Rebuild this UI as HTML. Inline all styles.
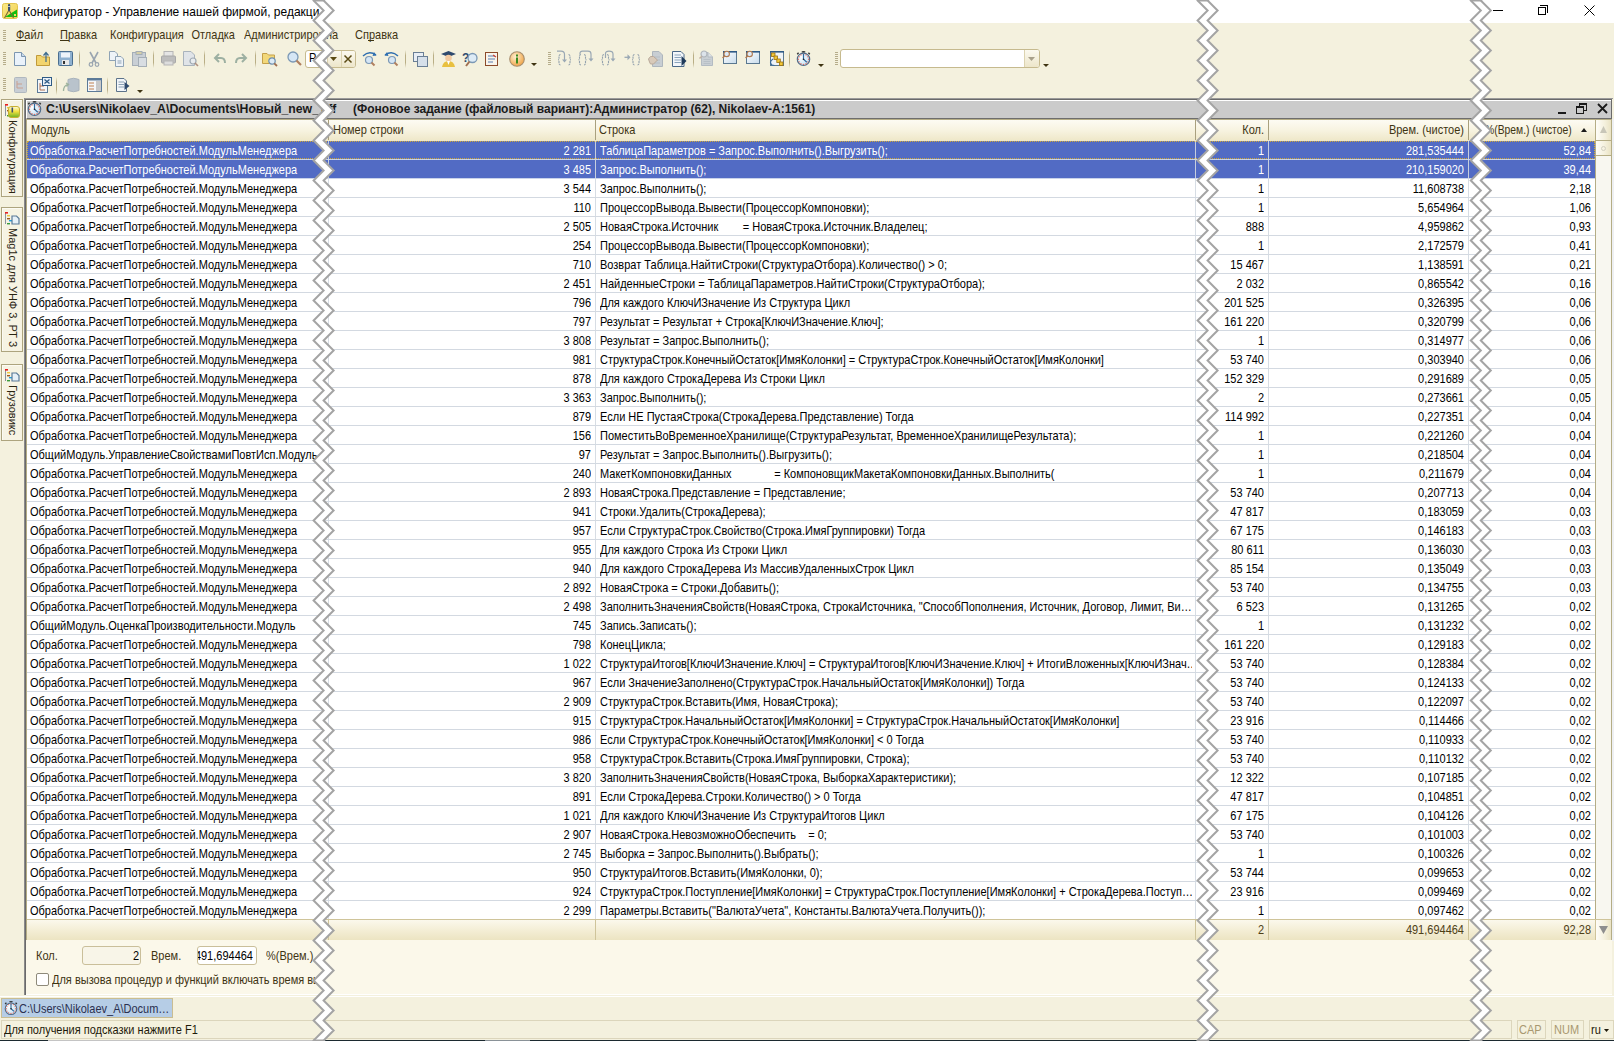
<!DOCTYPE html><html><head><meta charset="utf-8"><style>
*{box-sizing:border-box}
html,body{margin:0;padding:0}
body{width:1614px;height:1041px;position:relative;overflow:hidden;background:#F4F1DE;font-family:'Liberation Sans', sans-serif;font-size:11px;color:#000}
.a{position:absolute}
.t{position:absolute;white-space:pre;line-height:13px;transform:scaleY(1.1);transform-origin:0 10.3px}
.r{text-align:right}
.hd{color:#3E3412}
svg{position:absolute;overflow:visible}
</style></head><body>

<div class="a" style="left:0;top:0;width:1614px;height:23px;background:#fff"></div>
<svg style="left:2px;top:3px" width="16" height="16" viewBox="0 0 16 16">
<defs><linearGradient id="ag" x1="0" y1="0" x2="1" y2="1"><stop offset="0" stop-color="#FBEA88"/><stop offset="1" stop-color="#F2D050"/></linearGradient></defs>
<rect x="0.5" y="0.5" width="15" height="15" rx="2" fill="url(#ag)" stroke="#E2C550"/>
<path d="M3 14 L15 6.5 L15 14Z" fill="#10BE10"/>
<rect x="12" y="11" width="2" height="2" fill="#F6D860"/>
<path d="M7 7 L2.5 15 M7 7 L11.5 15" stroke="#7A6A30" stroke-width="1.1" fill="none"/>
<rect x="6" y="1" width="2.2" height="7" rx="1" fill="#3A5070"/>
<rect x="6" y="3" width="2.2" height="1" fill="#B8C0C8"/>
</svg>
<div class="t" style="left:23px;top:5px;font-size:12px;line-height:15px;transform-origin:0 11.7px;color:#000">Конфигуратор - Управление нашей фирмой, редакци</div>
<div class="a" style="left:1493px;top:10px;width:10px;height:1px;background:#000"></div>
<div class="a" style="left:1538px;top:7px;width:8px;height:8px;border:1px solid #000;background:#fff"></div>
<div class="a" style="left:1540px;top:5px;width:8px;height:2px;border-top:1px solid #000;"></div>
<div class="a" style="left:1547px;top:5px;width:1px;height:8px;background:#000"></div>
<svg style="left:1584px;top:5px" width="11" height="11" viewBox="0 0 11 11"><path d="M0.5 0.5 L10.5 10.5 M10.5 0.5 L0.5 10.5" stroke="#000" stroke-width="1"/></svg>
<div class="a" style="left:3px;top:30px;width:3px;height:1px;background:#B5AC8A"></div><div class="a" style="left:3px;top:32px;width:3px;height:1px;background:#B5AC8A"></div><div class="a" style="left:3px;top:34px;width:3px;height:1px;background:#B5AC8A"></div><div class="a" style="left:3px;top:36px;width:3px;height:1px;background:#B5AC8A"></div><div class="a" style="left:3px;top:38px;width:3px;height:1px;background:#B5AC8A"></div><div class="a" style="left:3px;top:40px;width:3px;height:1px;background:#B5AC8A"></div>
<div class="t hd" style="left:16px;top:29px">Файл</div>
<div class="t hd" style="left:60px;top:29px">Правка</div>
<div class="t hd" style="left:110px;top:29px">Конфигурация</div>
<div class="t hd" style="left:191.5px;top:29px">Отладка</div>
<div class="t hd" style="left:244px;top:29px">Администриров</div>
<div class="t hd" style="left:326px;top:29px">на</div>
<div class="t hd" style="left:355px;top:29px">Справка</div>
<div class="a" style="left:16px;top:40px;width:10px;height:1px;background:#3E3412"></div>
<div class="a" style="left:60px;top:40px;width:9px;height:1px;background:#3E3412"></div>
<div class="a" style="left:368px;top:40px;width:6px;height:1px;background:#3E3412"></div>
<div class="a" style="left:3px;top:52px;width:3px;height:1px;background:#B5AC8A"></div><div class="a" style="left:3px;top:54px;width:3px;height:1px;background:#B5AC8A"></div><div class="a" style="left:3px;top:56px;width:3px;height:1px;background:#B5AC8A"></div><div class="a" style="left:3px;top:58px;width:3px;height:1px;background:#B5AC8A"></div><div class="a" style="left:3px;top:60px;width:3px;height:1px;background:#B5AC8A"></div><div class="a" style="left:3px;top:62px;width:3px;height:1px;background:#B5AC8A"></div><div class="a" style="left:3px;top:64px;width:3px;height:1px;background:#B5AC8A"></div>
<div class="a" style="left:3px;top:78px;width:3px;height:1px;background:#B5AC8A"></div><div class="a" style="left:3px;top:80px;width:3px;height:1px;background:#B5AC8A"></div><div class="a" style="left:3px;top:82px;width:3px;height:1px;background:#B5AC8A"></div><div class="a" style="left:3px;top:84px;width:3px;height:1px;background:#B5AC8A"></div><div class="a" style="left:3px;top:86px;width:3px;height:1px;background:#B5AC8A"></div><div class="a" style="left:3px;top:88px;width:3px;height:1px;background:#B5AC8A"></div><div class="a" style="left:3px;top:90px;width:3px;height:1px;background:#B5AC8A"></div>
<div class="a" style="left:548px;top:52px;width:3px;height:1px;background:#B5AC8A"></div><div class="a" style="left:548px;top:54px;width:3px;height:1px;background:#B5AC8A"></div><div class="a" style="left:548px;top:56px;width:3px;height:1px;background:#B5AC8A"></div><div class="a" style="left:548px;top:58px;width:3px;height:1px;background:#B5AC8A"></div><div class="a" style="left:548px;top:60px;width:3px;height:1px;background:#B5AC8A"></div><div class="a" style="left:548px;top:62px;width:3px;height:1px;background:#B5AC8A"></div><div class="a" style="left:548px;top:64px;width:3px;height:1px;background:#B5AC8A"></div>
<div class="a" style="left:835px;top:52px;width:3px;height:1px;background:#B5AC8A"></div><div class="a" style="left:835px;top:54px;width:3px;height:1px;background:#B5AC8A"></div><div class="a" style="left:835px;top:56px;width:3px;height:1px;background:#B5AC8A"></div><div class="a" style="left:835px;top:58px;width:3px;height:1px;background:#B5AC8A"></div><div class="a" style="left:835px;top:60px;width:3px;height:1px;background:#B5AC8A"></div><div class="a" style="left:835px;top:62px;width:3px;height:1px;background:#B5AC8A"></div><div class="a" style="left:835px;top:64px;width:3px;height:1px;background:#B5AC8A"></div>
<svg style="left:13px;top:51px" width="14" height="16" viewBox="0 0 14 16"><path d="M1.5 1.5 H8.5 L12.5 5.5 V14.5 H1.5Z" fill="#EAF2FA" stroke="#7C96B0"/><path d="M8.5 1.5 V5.5 H12.5" fill="#C9D9EA" stroke="#7C96B0"/></svg><svg style="left:36px;top:51px" width="15" height="16" viewBox="0 0 15 16"><path d="M0.5 4.5 H5 L6.5 6 H13.5 V14.5 H0.5Z" fill="#F2D46E" stroke="#C09A3A"/><path d="M10 11 V2 M7.5 4.5 L10 1.5 L12.5 4.5" stroke="#3B6A8E" stroke-width="1.2" fill="none"/></svg><svg style="left:58px;top:51px" width="15" height="16" viewBox="0 0 15 16"><rect x="0.5" y="0.5" width="14" height="14" rx="1" fill="#8FB1D0" stroke="#4A6E90"/><rect x="3" y="1.5" width="9" height="5" fill="#EEF4FA"/><rect x="4" y="9" width="7" height="5" fill="#E8E8E8"/><rect x="5" y="10" width="2" height="3" fill="#333"/></svg><div class="a" style="left:79px;top:50px;width:1px;height:18px;background:linear-gradient(#F4F1DE,#B9AE85 30%,#B9AE85 70%,#F4F1DE)"></div><svg style="left:88px;top:51px" width="12" height="16" viewBox="0 0 12 16"><path d="M2 1 L8 12 M10 1 L4 12" stroke="#9AA5B0" stroke-width="1.6"/><circle cx="3" cy="13.5" r="1.8" fill="none" stroke="#9AA5B0" stroke-width="1.2"/><circle cx="9" cy="13.5" r="1.8" fill="none" stroke="#9AA5B0" stroke-width="1.2"/></svg><svg style="left:109px;top:51px" width="16" height="16" viewBox="0 0 16 16"><path d="M0.5 0.5 H6 L8.5 3 V9.5 H0.5Z" fill="#EEF3F8" stroke="#8FA3B5"/><path d="M6.5 5.5 H12 L14.5 8 V15.5 H6.5Z" fill="#EEF3F8" stroke="#8FA3B5"/><path d="M8.5 10 H12.5 M8.5 12 H12.5" stroke="#8FA3B5"/></svg><svg style="left:132px;top:51px" width="16" height="16" viewBox="0 0 16 16"><rect x="0.5" y="1.5" width="13" height="13" fill="#C9CFD5" stroke="#A5AEB6"/><rect x="4" y="0.5" width="6" height="3" fill="#D5CFA8" stroke="#A5AEB6"/><rect x="6.5" y="6.5" width="8" height="9" fill="#D8DDE2" stroke="#A5AEB6"/></svg><div class="a" style="left:153px;top:50px;width:1px;height:18px;background:linear-gradient(#F4F1DE,#B9AE85 30%,#B9AE85 70%,#F4F1DE)"></div><svg style="left:161px;top:51px" width="15" height="15" viewBox="0 0 15 15"><rect x="3" y="0.5" width="9" height="5" fill="#E5E5E5" stroke="#B5B5B5"/><rect x="0.5" y="5" width="14" height="7" rx="1" fill="#BDBDBD" stroke="#A8A8A8"/><rect x="3" y="10" width="9" height="4" fill="#DDD" stroke="#B5B5B5"/></svg><svg style="left:183px;top:51px" width="16" height="16" viewBox="0 0 16 16"><path d="M0.5 0.5 H8 L11.5 4 V14.5 H0.5Z" fill="#E0E4E8" stroke="#A9B3BC"/><circle cx="10" cy="10" r="3" fill="#E8ECEF" stroke="#9FA9B2" stroke-width="1.2"/><path d="M12 12 L15 15" stroke="#B09080" stroke-width="1.6"/></svg><div class="a" style="left:204px;top:50px;width:1px;height:18px;background:linear-gradient(#F4F1DE,#B9AE85 30%,#B9AE85 70%,#F4F1DE)"></div><svg style="left:214px;top:53px" width="12" height="11" viewBox="0 0 12 11"><path d="M5 1 L1 5 L5 9 M1.5 5 H7 Q11 5 11 10" stroke="#9DB0A2" stroke-width="2" fill="none"/></svg><svg style="left:235px;top:53px" width="12" height="11" viewBox="0 0 12 11"><path d="M7 1 L11 5 L7 9 M10.5 5 H5 Q1 5 1 10" stroke="#9DB0A2" stroke-width="2" fill="none"/></svg><div class="a" style="left:255px;top:50px;width:1px;height:18px;background:linear-gradient(#F4F1DE,#B9AE85 30%,#B9AE85 70%,#F4F1DE)"></div><svg style="left:262px;top:51px" width="16" height="16" viewBox="0 0 16 16"><path d="M0.5 2.5 H5 L6.5 4 H12.5 V12.5 H0.5Z" fill="#F2D87A" stroke="#C4A04A"/><circle cx="10" cy="10" r="3.2" fill="#DDEBF6" stroke="#6E8FAD" stroke-width="1.2"/><path d="M12.3 12.3 L15 15" stroke="#A06E50" stroke-width="1.8"/></svg><svg style="left:287px;top:51px" width="15" height="16" viewBox="0 0 15 16"><circle cx="6" cy="6" r="5" fill="#D5E6F5" stroke="#7B98B5" stroke-width="1.3"/><path d="M9.5 9.5 L14 14" stroke="#B08060" stroke-width="2.2"/></svg><div class="a" style="left:305px;top:50px;width:51px;height:18px;border:1px solid #C6BA8E;border-radius:3px;background:#fff"></div><div class="a" style="left:327px;top:51px;width:14px;height:16px;background:linear-gradient(#FBF9EF,#EDE6CA);border-left:1px solid #DCD3B0"></div><div class="a" style="left:341px;top:51px;width:14px;height:16px;background:linear-gradient(#FBF9EF,#EDE6CA);border-left:1px solid #DCD3B0;border-radius:0 2px 2px 0"></div><svg style="left:330px;top:57px" width="7" height="4" viewBox="0 0 7 4"><path d="M0 0 H7 L3.5 4Z" fill="#5A4A14"/></svg><svg style="left:344px;top:55px" width="8" height="8" viewBox="0 0 8 8"><path d="M0.5 0.5 L7.5 7.5 M7.5 0.5 L0.5 7.5" stroke="#5A4A14" stroke-width="1.5"/></svg><div class="t" style="left:309px;top:52px;color:#000">Р</div><svg style="left:362px;top:51px" width="15" height="16" viewBox="0 0 15 16"><path d="M1 5 Q7 -1 14 4" stroke="#2F6FB0" stroke-width="1.4" fill="none"/><path d="M12 1 L14.5 4.5 L10.5 5" fill="#2F6FB0"/><circle cx="7" cy="9" r="3.5" fill="#D5E6F5" stroke="#7B98B5" stroke-width="1.2"/><path d="M9.5 11.5 L12.5 14.5" stroke="#B08060" stroke-width="2"/></svg><svg style="left:384px;top:51px" width="15" height="16" viewBox="0 0 15 16"><path d="M14 5 Q8 -1 1 4" stroke="#2F6FB0" stroke-width="1.4" fill="none"/><path d="M3 1 L0.5 4.5 L4.5 5" fill="#2F6FB0"/><circle cx="8" cy="9" r="3.5" fill="#D5E6F5" stroke="#7B98B5" stroke-width="1.2"/><path d="M10.5 11.5 L13.5 14.5" stroke="#B08060" stroke-width="2"/></svg><div class="a" style="left:405px;top:50px;width:1px;height:18px;background:linear-gradient(#F4F1DE,#B9AE85 30%,#B9AE85 70%,#F4F1DE)"></div><svg style="left:413px;top:52px" width="15" height="15" viewBox="0 0 15 15"><rect x="0.5" y="0.5" width="10" height="9" fill="#E8EEF5" stroke="#6A7F95"/><rect x="4.5" y="4.5" width="10" height="10" fill="#D6E0EA" stroke="#6A7F95"/></svg><div class="a" style="left:433px;top:50px;width:1px;height:18px;background:linear-gradient(#F4F1DE,#B9AE85 30%,#B9AE85 70%,#F4F1DE)"></div><svg style="left:440px;top:50px" width="17" height="17" viewBox="0 0 17 17"><path d="M1 4 L8.5 1 L16 4 L8.5 7Z" fill="#2E4A6E"/><circle cx="8.5" cy="8" r="3.3" fill="#F2C9A0"/><path d="M2 17 Q3 11 8.5 11 Q14 11 15 17Z" fill="#E8C040"/><path d="M7 11 L8.5 15 L10 11" fill="#fff"/></svg><svg style="left:462px;top:51px" width="17" height="16" viewBox="0 0 17 16"><text x="0" y="11" font-family="Liberation Sans" font-weight="bold" font-size="12" fill="#2E4A6E">?</text><circle cx="10.5" cy="7" r="4.5" fill="#DDEBF6" stroke="#7B98B5" stroke-width="1.3"/><path d="M7.5 10.5 L4 15" stroke="#A07050" stroke-width="2"/></svg><svg style="left:485px;top:51px" width="14" height="16" viewBox="0 0 14 16"><rect x="0.5" y="1.5" width="12" height="13" fill="#F8F4EC" stroke="#8C4A2A"/><path d="M3 5 H10 M3 8 H10 M3 11 H8" stroke="#5A7FB0"/><path d="M8 4 L11 6" stroke="#D04030" stroke-width="1.2"/></svg><svg style="left:509px;top:51px" width="16" height="16" viewBox="0 0 16 16"><defs><radialGradient id="ig" cx="0.4" cy="0.35" r="0.7"><stop offset="0" stop-color="#FFF0D0"/><stop offset="1" stop-color="#EFA040"/></radialGradient></defs><circle cx="8" cy="8" r="7.3" fill="url(#ig)" stroke="#A89070" stroke-width="1.1"/><rect x="7" y="6.5" width="2" height="6" fill="#3A8A20"/><rect x="7" y="3.5" width="2" height="2" fill="#3A8A20"/></svg><svg style="left:531px;top:63px" width="6" height="3" viewBox="0 0 6 3"><path d="M0 0 H6 L3 3Z" fill="#3E3412"/></svg><svg style="left:557px;top:50px" width="17" height="17" viewBox="0 0 17 17"><path d="M3.5 4.5 Q2 4.5 2 6.5 V8.5 Q2 9.8 1 9.8 Q2 9.8 2 11 V13 Q2 15 3.5 15 M11.5 4.5 Q13 4.5 13 6.5 V8.5 Q13 9.8 14 9.8 Q13 9.8 13 11 V13 Q13 15 11.5 15" stroke="#94A2AE" stroke-width="1.1" fill="none" stroke-dasharray="2 0.6"/><path d="M0 1.2 H4 Q7.5 1.2 7.5 4.5 V10" stroke="#9AA8B4" stroke-width="1.2" fill="none"/><path d="M5 9.5 H10 L7.5 12.5Z" fill="#9AA8B4"/></svg><svg style="left:578px;top:50px" width="17" height="17" viewBox="0 0 17 17"><path d="M3.0 4.5 Q1.5 4.5 1.5 6.5 V8.5 Q1.5 9.8 0.5 9.8 Q1.5 9.8 1.5 11 V13 Q1.5 15 3.0 15 M6.0 4.5 Q7.5 4.5 7.5 6.5 V8.5 Q7.5 9.8 8.5 9.8 Q7.5 9.8 7.5 11 V13 Q7.5 15 6.0 15" stroke="#94A2AE" stroke-width="1.1" fill="none" stroke-dasharray="2 0.6"/><path d="M2 4.5 V3.5 Q2 1.2 4.5 1.2 H10 Q13 1.2 13 4 V9" stroke="#9AA8B4" stroke-width="1.2" fill="none"/><path d="M10.5 8.5 H15.5 L13 11.5Z" fill="#9AA8B4"/></svg><svg style="left:601px;top:50px" width="17" height="17" viewBox="0 0 17 17"><path d="M3.0 4.5 Q1.5 4.5 1.5 6.5 V8.5 Q1.5 9.8 0.5 9.8 Q1.5 9.8 1.5 11 V13 Q1.5 15 3.0 15 M6.0 4.5 Q7.5 4.5 7.5 6.5 V8.5 Q7.5 9.8 8.5 9.8 Q7.5 9.8 7.5 11 V13 Q7.5 15 6.0 15" stroke="#94A2AE" stroke-width="1.1" fill="none" stroke-dasharray="2 0.6"/><path d="M4.5 8 V3.5 Q4.5 1.2 8 1.2 Q12 1.2 12 4 V9" stroke="#9AA8B4" stroke-width="1.2" fill="none"/><path d="M9.5 8.5 H14.5 L12 11.5Z" fill="#9AA8B4"/></svg><svg style="left:624px;top:50px" width="17" height="17" viewBox="0 0 17 17"><path d="M10.5 4.5 Q9 4.5 9 6.5 V8.5 Q9 9.8 8 9.8 Q9 9.8 9 11 V13 Q9 15 10.5 15 M13.5 4.5 Q15 4.5 15 6.5 V8.5 Q15 9.8 16 9.8 Q15 9.8 15 11 V13 Q15 15 13.5 15" stroke="#94A2AE" stroke-width="1.1" fill="none" stroke-dasharray="2 0.6"/><path d="M0.5 7.3 H4" stroke="#9AA8B4" stroke-width="1.3"/><path d="M3.5 4.3 L6.5 7.3 L3.5 10.3Z" fill="#9AA8B4"/></svg><svg style="left:648px;top:51px" width="15" height="16" viewBox="0 0 15 16"><path d="M4.5 0.5 H11 L14.5 4 V15.5 H4.5Z" fill="#C8CED3" stroke="#AEB6BD"/><path d="M6 6 H12 M6 9 H12 M6 12 H12" stroke="#B5BDC4"/><path d="M0.5 8 L2.5 5.5 H5.5 L9.5 9 L5.5 13 H2.5 L1.5 11Z" fill="#D8CABA" stroke="#B9A999"/></svg><svg style="left:672px;top:51px" width="15" height="16" viewBox="0 0 15 16"><path d="M0.5 0.5 H9 L12 3.5 V15.5 H0.5Z" fill="#F2F6FA" stroke="#4A6888"/><path d="M2.5 4 H9 M2.5 6.5 H9 M2.5 9 H9 M2.5 11.5 H9" stroke="#8AA4BC"/><path d="M9.5 5 L14.5 10 L9.5 15Z" fill="#1E3A5A"/></svg><div class="a" style="left:693px;top:50px;width:1px;height:18px;background:linear-gradient(#F4F1DE,#B9AE85 30%,#B9AE85 70%,#F4F1DE)"></div><svg style="left:698px;top:50px" width="16" height="17" viewBox="0 0 16 17"><path d="M3.5 2.5 H10 L14.5 7 V15.5 H3.5Z" fill="#C9CFD4" stroke="#B3BBC2"/><path d="M10 2.5 V7 H14.5" fill="#DDE2E6" stroke="#B3BBC2"/><path d="M5.5 9.5 H12.5 M5.5 11.5 H12.5 M5.5 13.5 H12.5" stroke="#B8C0C7"/><circle cx="6" cy="4" r="3" fill="#DCE3EA" stroke="#B0B6BC" stroke-width="1.2"/><path d="M3.8 6.2 L1.5 8.5" stroke="#C0B0A0" stroke-width="1.5"/></svg><svg style="left:722px;top:50px" width="16" height="15" viewBox="0 0 16 15"><defs><linearGradient id="wg722" x1="0" y1="0" x2="1" y2="1"><stop offset="0" stop-color="#FFFFFF"/><stop offset="1" stop-color="#C8DCEC"/></linearGradient></defs><rect x="1.5" y="1.5" width="13" height="12" fill="url(#wg722)" stroke="#5A7890"/><rect x="1" y="1" width="14" height="1.6" fill="#2E5A86"/><circle cx="4.7" cy="3.9" r="2.7" fill="#DDEBF8" stroke="#B07A50" stroke-width="1.1"/><path d="M2.8 5.8 L0.6 8" stroke="#B07A50" stroke-width="1.5"/></svg><svg style="left:745px;top:50px" width="16" height="15" viewBox="0 0 16 15"><defs><linearGradient id="wg745" x1="0" y1="0" x2="1" y2="1"><stop offset="0" stop-color="#FFFFFF"/><stop offset="1" stop-color="#C8DCEC"/></linearGradient></defs><rect x="1.5" y="1.5" width="13" height="12" fill="url(#wg745)" stroke="#5A7890"/><rect x="1" y="1" width="14" height="1.6" fill="#2E5A86"/><circle cx="4.7" cy="3.9" r="2.7" fill="#DDEBF8" stroke="#B07A50" stroke-width="1.1"/><path d="M2.8 5.8 L0.6 8" stroke="#B07A50" stroke-width="1.5"/></svg><svg style="left:768px;top:50px" width="17" height="17" viewBox="0 0 17 17"><rect x="2.5" y="1.5" width="13" height="14" fill="#EEF3F8" stroke="#5A7890"/><rect x="2" y="1" width="14" height="1.6" fill="#2E5A86"/><path d="M5 9 Q0.5 12 4 15 L6.5 15.5" stroke="#3A6A9A" stroke-width="1.2" fill="none"/><rect x="3.5" y="3" width="3.5" height="3.5" fill="#F2C838" stroke="#9A7010" stroke-width="0.8"/><rect x="6" y="6" width="3.5" height="3.5" fill="#F2C838" stroke="#9A7010" stroke-width="0.8"/><rect x="8.8" y="9" width="3.5" height="3.5" fill="#F2C838" stroke="#9A7010" stroke-width="0.8"/><rect x="11.5" y="12" width="3.5" height="3.5" fill="#F2C838" stroke="#9A7010" stroke-width="0.8"/></svg><div class="a" style="left:789px;top:50px;width:1px;height:18px;background:linear-gradient(#F4F1DE,#B9AE85 30%,#B9AE85 70%,#F4F1DE)"></div><svg style="left:796px;top:51px" width="15" height="15" viewBox="0 0 15 15"><defs><radialGradient id="swg" cx="0.35" cy="0.35" r="0.8"><stop offset="0" stop-color="#FFFFFF"/><stop offset="1" stop-color="#B8DCF2"/></radialGradient></defs><ellipse cx="7.5" cy="0.9" rx="2" ry="0.8" fill="#333"/><path d="M1.2 3.2 L2.6 1.8 M13.8 3.2 L12.4 1.8" stroke="#333" stroke-width="1.4"/><circle cx="7.5" cy="8.3" r="6.2" fill="url(#swg)" stroke="#4C6C8A" stroke-width="1.2"/><circle cx="12.60" cy="8.30" r="0.7" fill="#E86A5A"/><circle cx="11.92" cy="10.85" r="0.7" fill="#E86A5A"/><circle cx="10.05" cy="12.72" r="0.7" fill="#E86A5A"/><circle cx="7.50" cy="13.40" r="0.7" fill="#E86A5A"/><circle cx="4.95" cy="12.72" r="0.7" fill="#E86A5A"/><circle cx="3.08" cy="10.85" r="0.7" fill="#E86A5A"/><circle cx="2.40" cy="8.30" r="0.7" fill="#E86A5A"/><circle cx="3.08" cy="5.75" r="0.7" fill="#E86A5A"/><circle cx="4.95" cy="3.88" r="0.7" fill="#E86A5A"/><circle cx="7.50" cy="3.20" r="0.7" fill="#E86A5A"/><circle cx="10.05" cy="3.88" r="0.7" fill="#E86A5A"/><circle cx="11.92" cy="5.75" r="0.7" fill="#E86A5A"/><path d="M7.5 2.8 V8.3 L10.8 11.2" stroke="#2F6A9E" stroke-width="1.2" fill="none"/><circle cx="7.5" cy="8.3" r="0.8" fill="#222"/></svg><svg style="left:818px;top:64px" width="6" height="3" viewBox="0 0 6 3"><path d="M0 0 H6 L3 3Z" fill="#3E3412"/></svg><div class="a" style="left:840px;top:49px;width:200px;height:19px;border:1px solid #C6BA8E;border-radius:3px;background:#fff"></div><div class="a" style="left:1024px;top:50px;width:15px;height:17px;background:linear-gradient(#FBF9EF,#EDE6CA);border-left:1px solid #DCD3B0;border-radius:0 2px 2px 0"></div><svg style="left:1028px;top:57px" width="7" height="4" viewBox="0 0 7 4"><path d="M0 0 H7 L3.5 4Z" fill="#A8A08A"/></svg><svg style="left:1043px;top:64px" width="6" height="3" viewBox="0 0 6 3"><path d="M0 0 H6 L3 3Z" fill="#3E3412"/></svg><svg style="left:14px;top:77px" width="13" height="16" viewBox="0 0 13 16"><rect x="0.5" y="0.5" width="12" height="15" rx="1" fill="#C8CED4" stroke="#B0B8BF"/><path d="M3 4 V11 H9 M3 7 H8" stroke="#C9A090" fill="none"/></svg><svg style="left:37px;top:77px" width="15" height="16" viewBox="0 0 15 16"><rect x="0.5" y="2.5" width="10" height="13" fill="#F4F7FA" stroke="#5C7A98"/><path d="M3 6 V13 H8 M3 9 H7" stroke="#B07050" fill="none"/><rect x="5.5" y="0.5" width="9" height="8" fill="#EAF1F8" stroke="#2E5A86"/><path d="M7.5 2.5 L12.5 6.5 M12.5 2.5 L7.5 6.5" stroke="#2E5A86" stroke-width="1.3"/></svg><div class="a" style="left:56px;top:77px;width:1px;height:18px;background:linear-gradient(#F4F1DE,#B9AE85 30%,#B9AE85 70%,#F4F1DE)"></div><svg style="left:63px;top:77px" width="17" height="16" viewBox="0 0 17 16"><path d="M5 2.5 Q10.5 0 16 2.5 V13.5 Q10.5 16 5 13.5Z" fill="#B9C3CC" stroke="#A9B3BC"/><path d="M0.5 14 Q0.5 9 4.5 7.5 M3 6 L5.5 7.5 L3.5 9.5" stroke="#9EB39E" stroke-width="1.3" fill="none"/></svg><svg style="left:87px;top:78px" width="15" height="14" viewBox="0 0 15 14"><rect x="0.5" y="0.5" width="14" height="13" fill="#F4F7FA" stroke="#5C7A98"/><rect x="0.5" y="0.5" width="14" height="2" fill="#5C7A98"/><rect x="9" y="3" width="5" height="10" fill="#C8C8C8"/><path d="M2 5 H7 M2 8 H7 M2 11 H7" stroke="#C08050"/></svg><div class="a" style="left:107px;top:77px;width:1px;height:18px;background:linear-gradient(#F4F1DE,#B9AE85 30%,#B9AE85 70%,#F4F1DE)"></div><svg style="left:116px;top:78px" width="14" height="14" viewBox="0 0 14 14"><path d="M0.5 0.5 H8 L10.5 3 V13.5 H0.5Z" fill="#F1F5F9" stroke="#5C738A"/><path d="M2.5 4 H8 M2.5 6.5 H8 M2.5 9 H8" stroke="#8AA0B5"/><path d="M8.5 4 L13.5 8 L8.5 12Z" fill="#2E4A6E"/></svg><svg style="left:137px;top:90px" width="6" height="3" viewBox="0 0 6 3"><path d="M0 0 H6 L3 3Z" fill="#3E3412"/></svg>
<div class="a" style="left:1px;top:99px;width:22px;height:98px;border:1px solid #ADA47E;background:#F6F3E3;box-shadow:inset 1px 1px 0 #FCFBF3"></div><svg style="left:5px;top:104px" width="8" height="13" viewBox="0 0 8 13"><path d="M0.5 1 V12" stroke="#8A94A0" stroke-width="1"/><rect x="0" y="0" width="3" height="1.6" fill="#E82020"/><rect x="2" y="3" width="3" height="1.4" fill="#F0C840"/><rect x="2" y="6" width="3" height="1.4" fill="#A05A20"/><rect x="4" y="8" width="3" height="1.4" fill="#20A0E0"/><rect x="2" y="11" width="3" height="1.4" fill="#3A9A3A"/></svg><svg style="left:8px;top:106px" width="12" height="12" viewBox="0 0 12 12"><defs><linearGradient id="tg1" x1="0" y1="0" x2="0" y2="1"><stop offset="0" stop-color="#FFFBE0"/><stop offset="0.45" stop-color="#F2E040"/><stop offset="1" stop-color="#6AB020"/></linearGradient></defs><rect x="0.5" y="0.5" width="11" height="11" rx="2.5" fill="url(#tg1)" stroke="#C8B030"/><rect x="3.5" y="1.5" width="1.6" height="5" fill="#40506A"/></svg><div class="t hd" style="left:19px;top:120px;transform-origin:0 0;transform:rotate(90deg) scaleY(1.05);color:#2A2410">Конфигурация</div>
<div class="a" style="left:1px;top:207px;width:22px;height:145px;border:1px solid #ADA47E;background:#F6F3E3;box-shadow:inset 1px 1px 0 #FCFBF3"></div><svg style="left:5px;top:212px" width="8" height="13" viewBox="0 0 8 13"><path d="M0.5 1 V12" stroke="#8A94A0" stroke-width="1"/><rect x="0" y="0" width="3" height="1.6" fill="#E82020"/><rect x="2" y="3" width="3" height="1.4" fill="#F0C840"/><rect x="2" y="6" width="3" height="1.4" fill="#A05A20"/><rect x="4" y="8" width="3" height="1.4" fill="#20A0E0"/><rect x="2" y="11" width="3" height="1.4" fill="#3A9A3A"/></svg><svg style="left:11px;top:215px" width="9" height="10" viewBox="0 0 9 10"><path d="M1 1 H5.5 L8 3.5 V9 H1Z" fill="#E6F0F8" stroke="#5A7A98" stroke-width="1.2"/></svg><div class="t hd" style="left:19px;top:228px;transform-origin:0 0;transform:rotate(90deg) scaleY(1.05);color:#2A2410">Mag1c для УНФ 3, РТ 3</div>
<div class="a" style="left:1px;top:364px;width:22px;height:77px;border:1px solid #ADA47E;background:#F6F3E3;box-shadow:inset 1px 1px 0 #FCFBF3"></div><svg style="left:5px;top:369px" width="8" height="13" viewBox="0 0 8 13"><path d="M0.5 1 V12" stroke="#8A94A0" stroke-width="1"/><rect x="0" y="0" width="3" height="1.6" fill="#E82020"/><rect x="2" y="3" width="3" height="1.4" fill="#F0C840"/><rect x="2" y="6" width="3" height="1.4" fill="#A05A20"/><rect x="4" y="8" width="3" height="1.4" fill="#20A0E0"/><rect x="2" y="11" width="3" height="1.4" fill="#3A9A3A"/></svg><svg style="left:11px;top:372px" width="9" height="10" viewBox="0 0 9 10"><path d="M1 1 H5.5 L8 3.5 V9 H1Z" fill="#E6F0F8" stroke="#5A7A98" stroke-width="1.2"/></svg><div class="t hd" style="left:19px;top:385px;transform-origin:0 0;transform:rotate(90deg) scaleY(1.05);color:#2A2410">Грузовикс</div>
<div class="a" style="left:24px;top:98px;width:1589px;height:1px;background:#9A9A9A"></div>
<div class="a" style="left:24px;top:99px;width:1588px;height:1px;background:#6A6A6A"></div>
<div class="a" style="left:24px;top:98px;width:1px;height:897px;background:#8A8A8A"></div>
<div class="a" style="left:25px;top:99px;width:1px;height:896px;background:#6A6A6A"></div>
<div class="a" style="left:26px;top:100px;width:1585px;height:19px;background:#CBCBCB;border-top:1px solid #fff;border-left:1px solid #fff;border-bottom:1px solid #6E6E6E"></div>
<div class="a" style="left:1611px;top:100px;width:1px;height:19px;background:#6A6A6A"></div>
<svg style="left:27px;top:101px" width="15" height="15" viewBox="0 0 15 15"><defs><radialGradient id="swg" cx="0.35" cy="0.35" r="0.8"><stop offset="0" stop-color="#FFFFFF"/><stop offset="1" stop-color="#B8DCF2"/></radialGradient></defs><ellipse cx="7.5" cy="0.9" rx="2" ry="0.8" fill="#333"/><path d="M1.2 3.2 L2.6 1.8 M13.8 3.2 L12.4 1.8" stroke="#333" stroke-width="1.4"/><circle cx="7.5" cy="8.3" r="6.2" fill="url(#swg)" stroke="#4C6C8A" stroke-width="1.2"/><circle cx="12.60" cy="8.30" r="0.7" fill="#E86A5A"/><circle cx="11.92" cy="10.85" r="0.7" fill="#E86A5A"/><circle cx="10.05" cy="12.72" r="0.7" fill="#E86A5A"/><circle cx="7.50" cy="13.40" r="0.7" fill="#E86A5A"/><circle cx="4.95" cy="12.72" r="0.7" fill="#E86A5A"/><circle cx="3.08" cy="10.85" r="0.7" fill="#E86A5A"/><circle cx="2.40" cy="8.30" r="0.7" fill="#E86A5A"/><circle cx="3.08" cy="5.75" r="0.7" fill="#E86A5A"/><circle cx="4.95" cy="3.88" r="0.7" fill="#E86A5A"/><circle cx="7.50" cy="3.20" r="0.7" fill="#E86A5A"/><circle cx="10.05" cy="3.88" r="0.7" fill="#E86A5A"/><circle cx="11.92" cy="5.75" r="0.7" fill="#E86A5A"/><path d="M7.5 2.8 V8.3 L10.8 11.2" stroke="#2F6A9E" stroke-width="1.2" fill="none"/><circle cx="7.5" cy="8.3" r="0.8" fill="#222"/></svg>
<div class="t" style="left:46px;top:102px;font-size:12px;line-height:14px;transform-origin:0 11px;transform:scale(1.022,1.1);font-weight:bold;color:#1A1A1A">C:\Users\Nikolaev_A\Documents\Новый_new_</div>
<div class="t" style="left:321px;top:102px;font-size:12px;line-height:14px;transform-origin:0 11px;font-weight:bold;color:#1A1A1A">pff</div>
<div class="t" style="left:353px;top:102px;font-size:12px;line-height:14px;transform-origin:0 11px;font-weight:bold;color:#1A1A1A">(Фоновое задание (файловый вариант):Администратор (62), Nikolaev-A:1561)</div>
<div class="a" style="left:1558px;top:112px;width:8px;height:2px;background:#1A1A1A"></div>
<div class="a" style="left:1579px;top:103px;width:8px;height:8px;border:1px solid #1A1A1A;border-top-width:2px"></div>
<div class="a" style="left:1576px;top:106px;width:8px;height:8px;border:1px solid #1A1A1A;border-top-width:2px;background:#CBCBCB"></div>
<svg style="left:1597px;top:103px" width="11" height="11" viewBox="0 0 11 11"><path d="M1 1 L10 10 M10 1 L1 10" stroke="#1A1A1A" stroke-width="1.8"/></svg>
<div class="a" style="left:1612px;top:119px;width:2px;height:822px;background:#EEF0F3"></div>
<div class="a" style="left:26px;top:119px;width:1586px;height:822px;background:#fff;border:1px solid #B5AD85"></div>
<div class="a" style="left:27px;top:120px;width:1568px;height:21px;background:linear-gradient(#FDFBF3,#F7F3E0 50%,#EEE7C8)"></div>
<div class="a" style="left:328px;top:120px;width:1px;height:20px;background:#A9A07E"></div>
<div class="a" style="left:595px;top:120px;width:1px;height:20px;background:#A9A07E"></div>
<div class="a" style="left:1195px;top:120px;width:1px;height:20px;background:#A9A07E"></div>
<div class="a" style="left:1268px;top:120px;width:1px;height:20px;background:#A9A07E"></div>
<div class="a" style="left:1468px;top:120px;width:1px;height:20px;background:#A9A07E"></div>
<div class="t hd" style="left:31px;top:124px">Модуль</div>
<div class="t hd" style="left:333px;top:124px">Номер строки</div>
<div class="t hd" style="left:599px;top:124px">Строка</div>
<div class="t hd r" style="left:1200px;width:64px;top:124px">Кол.</div>
<div class="t hd r" style="left:1270px;width:194px;top:124px">Врем. (чистое)</div>
<div class="t hd" style="left:1485px;top:124px;transform:scale(0.94,1.1)">%(Врем.) (чистое)</div>
<svg style="left:1581px;top:128px" width="6" height="4" viewBox="0 0 6 4"><path d="M0 4 H6 L3 0Z" fill="#1A1A1A"/></svg>
<div class="a" style="left:27px;top:141px;width:1568px;height:19px;background:#526BC4;border-bottom:1px solid #C9D3EA"></div>
<div class="t" style="left:30px;top:145px;color:#FFFFFF">Обработка.РасчетПотребностей.МодульМенеджера</div>
<div class="t r" style="left:340px;width:251px;top:145px;color:#FFFFFF">2 281</div>
<div class="t" style="left:600px;width:592px;overflow:hidden;top:145px;color:#FFFFFF">ТаблицаПараметров = Запрос.Выполнить().Выгрузить();</div>
<div class="t r" style="left:1198px;width:66px;top:145px;color:#FFFFFF">1</div>
<div class="t r" style="left:1270px;width:194px;top:145px;color:#FFFFFF">281,535444</div>
<div class="t r" style="left:1470px;width:121px;top:145px;color:#FFFFFF">52,84</div>
<div class="a" style="left:27px;top:160px;width:1568px;height:19px;background:#526BC4;border-bottom:1px solid #C9D3EA"></div>
<div class="t" style="left:30px;top:164px;color:#FFFFFF">Обработка.РасчетПотребностей.МодульМенеджера</div>
<div class="t r" style="left:340px;width:251px;top:164px;color:#FFFFFF">3 485</div>
<div class="t" style="left:600px;width:592px;overflow:hidden;top:164px;color:#FFFFFF">Запрос.Выполнить();</div>
<div class="t r" style="left:1198px;width:66px;top:164px;color:#FFFFFF">1</div>
<div class="t r" style="left:1270px;width:194px;top:164px;color:#FFFFFF">210,159020</div>
<div class="t r" style="left:1470px;width:121px;top:164px;color:#FFFFFF">39,44</div>
<div class="a" style="left:27px;top:179px;width:1568px;height:19px;background:#FFFFFF;border-bottom:1px solid #D3D9E1"></div>
<div class="t" style="left:30px;top:183px;color:#000">Обработка.РасчетПотребностей.МодульМенеджера</div>
<div class="t r" style="left:340px;width:251px;top:183px;color:#000">3 544</div>
<div class="t" style="left:600px;width:592px;overflow:hidden;top:183px;color:#000">Запрос.Выполнить();</div>
<div class="t r" style="left:1198px;width:66px;top:183px;color:#000">1</div>
<div class="t r" style="left:1270px;width:194px;top:183px;color:#000">11,608738</div>
<div class="t r" style="left:1470px;width:121px;top:183px;color:#000">2,18</div>
<div class="a" style="left:27px;top:198px;width:1568px;height:19px;background:#FFFFFF;border-bottom:1px solid #D3D9E1"></div>
<div class="t" style="left:30px;top:202px;color:#000">Обработка.РасчетПотребностей.МодульМенеджера</div>
<div class="t r" style="left:340px;width:251px;top:202px;color:#000">110</div>
<div class="t" style="left:600px;width:592px;overflow:hidden;top:202px;color:#000">ПроцессорВывода.Вывести(ПроцессорКомпоновки);</div>
<div class="t r" style="left:1198px;width:66px;top:202px;color:#000">1</div>
<div class="t r" style="left:1270px;width:194px;top:202px;color:#000">5,654964</div>
<div class="t r" style="left:1470px;width:121px;top:202px;color:#000">1,06</div>
<div class="a" style="left:27px;top:217px;width:1568px;height:19px;background:#FFFFFF;border-bottom:1px solid #D3D9E1"></div>
<div class="t" style="left:30px;top:221px;color:#000">Обработка.РасчетПотребностей.МодульМенеджера</div>
<div class="t r" style="left:340px;width:251px;top:221px;color:#000">2 505</div>
<div class="t" style="left:600px;width:592px;overflow:hidden;top:221px;color:#000">НоваяСтрока.Источник        = НоваяСтрока.Источник.Владелец;</div>
<div class="t r" style="left:1198px;width:66px;top:221px;color:#000">888</div>
<div class="t r" style="left:1270px;width:194px;top:221px;color:#000">4,959862</div>
<div class="t r" style="left:1470px;width:121px;top:221px;color:#000">0,93</div>
<div class="a" style="left:27px;top:236px;width:1568px;height:19px;background:#FFFFFF;border-bottom:1px solid #D3D9E1"></div>
<div class="t" style="left:30px;top:240px;color:#000">Обработка.РасчетПотребностей.МодульМенеджера</div>
<div class="t r" style="left:340px;width:251px;top:240px;color:#000">254</div>
<div class="t" style="left:600px;width:592px;overflow:hidden;top:240px;color:#000">ПроцессорВывода.Вывести(ПроцессорКомпоновки);</div>
<div class="t r" style="left:1198px;width:66px;top:240px;color:#000">1</div>
<div class="t r" style="left:1270px;width:194px;top:240px;color:#000">2,172579</div>
<div class="t r" style="left:1470px;width:121px;top:240px;color:#000">0,41</div>
<div class="a" style="left:27px;top:255px;width:1568px;height:19px;background:#FFFFFF;border-bottom:1px solid #D3D9E1"></div>
<div class="t" style="left:30px;top:259px;color:#000">Обработка.РасчетПотребностей.МодульМенеджера</div>
<div class="t r" style="left:340px;width:251px;top:259px;color:#000">710</div>
<div class="t" style="left:600px;width:592px;overflow:hidden;top:259px;color:#000">Возврат Таблица.НайтиСтроки(СтруктураОтбора).Количество() &gt; 0;</div>
<div class="t r" style="left:1198px;width:66px;top:259px;color:#000">15 467</div>
<div class="t r" style="left:1270px;width:194px;top:259px;color:#000">1,138591</div>
<div class="t r" style="left:1470px;width:121px;top:259px;color:#000">0,21</div>
<div class="a" style="left:27px;top:274px;width:1568px;height:19px;background:#FFFFFF;border-bottom:1px solid #D3D9E1"></div>
<div class="t" style="left:30px;top:278px;color:#000">Обработка.РасчетПотребностей.МодульМенеджера</div>
<div class="t r" style="left:340px;width:251px;top:278px;color:#000">2 451</div>
<div class="t" style="left:600px;width:592px;overflow:hidden;top:278px;color:#000">НайденныеСтроки = ТаблицаПараметров.НайтиСтроки(СтруктураОтбора);</div>
<div class="t r" style="left:1198px;width:66px;top:278px;color:#000">2 032</div>
<div class="t r" style="left:1270px;width:194px;top:278px;color:#000">0,865542</div>
<div class="t r" style="left:1470px;width:121px;top:278px;color:#000">0,16</div>
<div class="a" style="left:27px;top:293px;width:1568px;height:19px;background:#FFFFFF;border-bottom:1px solid #D3D9E1"></div>
<div class="t" style="left:30px;top:297px;color:#000">Обработка.РасчетПотребностей.МодульМенеджера</div>
<div class="t r" style="left:340px;width:251px;top:297px;color:#000">796</div>
<div class="t" style="left:600px;width:592px;overflow:hidden;top:297px;color:#000">Для каждого КлючИЗначение Из Структура Цикл</div>
<div class="t r" style="left:1198px;width:66px;top:297px;color:#000">201 525</div>
<div class="t r" style="left:1270px;width:194px;top:297px;color:#000">0,326395</div>
<div class="t r" style="left:1470px;width:121px;top:297px;color:#000">0,06</div>
<div class="a" style="left:27px;top:312px;width:1568px;height:19px;background:#FFFFFF;border-bottom:1px solid #D3D9E1"></div>
<div class="t" style="left:30px;top:316px;color:#000">Обработка.РасчетПотребностей.МодульМенеджера</div>
<div class="t r" style="left:340px;width:251px;top:316px;color:#000">797</div>
<div class="t" style="left:600px;width:592px;overflow:hidden;top:316px;color:#000">Результат = Результат + Строка[КлючИЗначение.Ключ];</div>
<div class="t r" style="left:1198px;width:66px;top:316px;color:#000">161 220</div>
<div class="t r" style="left:1270px;width:194px;top:316px;color:#000">0,320799</div>
<div class="t r" style="left:1470px;width:121px;top:316px;color:#000">0,06</div>
<div class="a" style="left:27px;top:331px;width:1568px;height:19px;background:#FFFFFF;border-bottom:1px solid #D3D9E1"></div>
<div class="t" style="left:30px;top:335px;color:#000">Обработка.РасчетПотребностей.МодульМенеджера</div>
<div class="t r" style="left:340px;width:251px;top:335px;color:#000">3 808</div>
<div class="t" style="left:600px;width:592px;overflow:hidden;top:335px;color:#000">Результат = Запрос.Выполнить();</div>
<div class="t r" style="left:1198px;width:66px;top:335px;color:#000">1</div>
<div class="t r" style="left:1270px;width:194px;top:335px;color:#000">0,314977</div>
<div class="t r" style="left:1470px;width:121px;top:335px;color:#000">0,06</div>
<div class="a" style="left:27px;top:350px;width:1568px;height:19px;background:#FFFFFF;border-bottom:1px solid #D3D9E1"></div>
<div class="t" style="left:30px;top:354px;color:#000">Обработка.РасчетПотребностей.МодульМенеджера</div>
<div class="t r" style="left:340px;width:251px;top:354px;color:#000">981</div>
<div class="t" style="left:600px;width:592px;overflow:hidden;top:354px;color:#000">СтруктураСтрок.КонечныйОстаток[ИмяКолонки] = СтруктураСтрок.КонечныйОстаток[ИмяКолонки]</div>
<div class="t r" style="left:1198px;width:66px;top:354px;color:#000">53 740</div>
<div class="t r" style="left:1270px;width:194px;top:354px;color:#000">0,303940</div>
<div class="t r" style="left:1470px;width:121px;top:354px;color:#000">0,06</div>
<div class="a" style="left:27px;top:369px;width:1568px;height:19px;background:#FFFFFF;border-bottom:1px solid #D3D9E1"></div>
<div class="t" style="left:30px;top:373px;color:#000">Обработка.РасчетПотребностей.МодульМенеджера</div>
<div class="t r" style="left:340px;width:251px;top:373px;color:#000">878</div>
<div class="t" style="left:600px;width:592px;overflow:hidden;top:373px;color:#000">Для каждого СтрокаДерева Из Строки Цикл</div>
<div class="t r" style="left:1198px;width:66px;top:373px;color:#000">152 329</div>
<div class="t r" style="left:1270px;width:194px;top:373px;color:#000">0,291689</div>
<div class="t r" style="left:1470px;width:121px;top:373px;color:#000">0,05</div>
<div class="a" style="left:27px;top:388px;width:1568px;height:19px;background:#FFFFFF;border-bottom:1px solid #D3D9E1"></div>
<div class="t" style="left:30px;top:392px;color:#000">Обработка.РасчетПотребностей.МодульМенеджера</div>
<div class="t r" style="left:340px;width:251px;top:392px;color:#000">3 363</div>
<div class="t" style="left:600px;width:592px;overflow:hidden;top:392px;color:#000">Запрос.Выполнить();</div>
<div class="t r" style="left:1198px;width:66px;top:392px;color:#000">2</div>
<div class="t r" style="left:1270px;width:194px;top:392px;color:#000">0,273661</div>
<div class="t r" style="left:1470px;width:121px;top:392px;color:#000">0,05</div>
<div class="a" style="left:27px;top:407px;width:1568px;height:19px;background:#FFFFFF;border-bottom:1px solid #D3D9E1"></div>
<div class="t" style="left:30px;top:411px;color:#000">Обработка.РасчетПотребностей.МодульМенеджера</div>
<div class="t r" style="left:340px;width:251px;top:411px;color:#000">879</div>
<div class="t" style="left:600px;width:592px;overflow:hidden;top:411px;color:#000">Если НЕ ПустаяСтрока(СтрокаДерева.Представление) Тогда</div>
<div class="t r" style="left:1198px;width:66px;top:411px;color:#000">114 992</div>
<div class="t r" style="left:1270px;width:194px;top:411px;color:#000">0,227351</div>
<div class="t r" style="left:1470px;width:121px;top:411px;color:#000">0,04</div>
<div class="a" style="left:27px;top:426px;width:1568px;height:19px;background:#FFFFFF;border-bottom:1px solid #D3D9E1"></div>
<div class="t" style="left:30px;top:430px;color:#000">Обработка.РасчетПотребностей.МодульМенеджера</div>
<div class="t r" style="left:340px;width:251px;top:430px;color:#000">156</div>
<div class="t" style="left:600px;width:592px;overflow:hidden;top:430px;color:#000">ПоместитьВоВременноеХранилище(СтруктураРезультат, ВременноеХранилищеРезультата);</div>
<div class="t r" style="left:1198px;width:66px;top:430px;color:#000">1</div>
<div class="t r" style="left:1270px;width:194px;top:430px;color:#000">0,221260</div>
<div class="t r" style="left:1470px;width:121px;top:430px;color:#000">0,04</div>
<div class="a" style="left:27px;top:445px;width:1568px;height:19px;background:#FFFFFF;border-bottom:1px solid #D3D9E1"></div>
<div class="t" style="left:30px;top:449px;color:#000">ОбщийМодуль.УправлениеСвойствамиПовтИсп.Модуль</div>
<div class="t r" style="left:340px;width:251px;top:449px;color:#000">97</div>
<div class="t" style="left:600px;width:592px;overflow:hidden;top:449px;color:#000">Результат = Запрос.Выполнить().Выгрузить();</div>
<div class="t r" style="left:1198px;width:66px;top:449px;color:#000">1</div>
<div class="t r" style="left:1270px;width:194px;top:449px;color:#000">0,218504</div>
<div class="t r" style="left:1470px;width:121px;top:449px;color:#000">0,04</div>
<div class="a" style="left:27px;top:464px;width:1568px;height:19px;background:#FFFFFF;border-bottom:1px solid #D3D9E1"></div>
<div class="t" style="left:30px;top:468px;color:#000">Обработка.РасчетПотребностей.МодульМенеджера</div>
<div class="t r" style="left:340px;width:251px;top:468px;color:#000">240</div>
<div class="t" style="left:600px;width:592px;overflow:hidden;top:468px;color:#000">МакетКомпоновкиДанных              = КомпоновщикМакетаКомпоновкиДанных.Выполнить(</div>
<div class="t r" style="left:1198px;width:66px;top:468px;color:#000">1</div>
<div class="t r" style="left:1270px;width:194px;top:468px;color:#000">0,211679</div>
<div class="t r" style="left:1470px;width:121px;top:468px;color:#000">0,04</div>
<div class="a" style="left:27px;top:483px;width:1568px;height:19px;background:#FFFFFF;border-bottom:1px solid #D3D9E1"></div>
<div class="t" style="left:30px;top:487px;color:#000">Обработка.РасчетПотребностей.МодульМенеджера</div>
<div class="t r" style="left:340px;width:251px;top:487px;color:#000">2 893</div>
<div class="t" style="left:600px;width:592px;overflow:hidden;top:487px;color:#000">НоваяСтрока.Представление = Представление;</div>
<div class="t r" style="left:1198px;width:66px;top:487px;color:#000">53 740</div>
<div class="t r" style="left:1270px;width:194px;top:487px;color:#000">0,207713</div>
<div class="t r" style="left:1470px;width:121px;top:487px;color:#000">0,04</div>
<div class="a" style="left:27px;top:502px;width:1568px;height:19px;background:#FFFFFF;border-bottom:1px solid #D3D9E1"></div>
<div class="t" style="left:30px;top:506px;color:#000">Обработка.РасчетПотребностей.МодульМенеджера</div>
<div class="t r" style="left:340px;width:251px;top:506px;color:#000">941</div>
<div class="t" style="left:600px;width:592px;overflow:hidden;top:506px;color:#000">Строки.Удалить(СтрокаДерева);</div>
<div class="t r" style="left:1198px;width:66px;top:506px;color:#000">47 817</div>
<div class="t r" style="left:1270px;width:194px;top:506px;color:#000">0,183059</div>
<div class="t r" style="left:1470px;width:121px;top:506px;color:#000">0,03</div>
<div class="a" style="left:27px;top:521px;width:1568px;height:19px;background:#FFFFFF;border-bottom:1px solid #D3D9E1"></div>
<div class="t" style="left:30px;top:525px;color:#000">Обработка.РасчетПотребностей.МодульМенеджера</div>
<div class="t r" style="left:340px;width:251px;top:525px;color:#000">957</div>
<div class="t" style="left:600px;width:592px;overflow:hidden;top:525px;color:#000">Если СтруктураСтрок.Свойство(Строка.ИмяГруппировки) Тогда</div>
<div class="t r" style="left:1198px;width:66px;top:525px;color:#000">67 175</div>
<div class="t r" style="left:1270px;width:194px;top:525px;color:#000">0,146183</div>
<div class="t r" style="left:1470px;width:121px;top:525px;color:#000">0,03</div>
<div class="a" style="left:27px;top:540px;width:1568px;height:19px;background:#FFFFFF;border-bottom:1px solid #D3D9E1"></div>
<div class="t" style="left:30px;top:544px;color:#000">Обработка.РасчетПотребностей.МодульМенеджера</div>
<div class="t r" style="left:340px;width:251px;top:544px;color:#000">955</div>
<div class="t" style="left:600px;width:592px;overflow:hidden;top:544px;color:#000">Для каждого Строка Из Строки Цикл</div>
<div class="t r" style="left:1198px;width:66px;top:544px;color:#000">80 611</div>
<div class="t r" style="left:1270px;width:194px;top:544px;color:#000">0,136030</div>
<div class="t r" style="left:1470px;width:121px;top:544px;color:#000">0,03</div>
<div class="a" style="left:27px;top:559px;width:1568px;height:19px;background:#FFFFFF;border-bottom:1px solid #D3D9E1"></div>
<div class="t" style="left:30px;top:563px;color:#000">Обработка.РасчетПотребностей.МодульМенеджера</div>
<div class="t r" style="left:340px;width:251px;top:563px;color:#000">940</div>
<div class="t" style="left:600px;width:592px;overflow:hidden;top:563px;color:#000">Для каждого СтрокаДерева Из МассивУдаленныхСтрок Цикл</div>
<div class="t r" style="left:1198px;width:66px;top:563px;color:#000">85 154</div>
<div class="t r" style="left:1270px;width:194px;top:563px;color:#000">0,135049</div>
<div class="t r" style="left:1470px;width:121px;top:563px;color:#000">0,03</div>
<div class="a" style="left:27px;top:578px;width:1568px;height:19px;background:#FFFFFF;border-bottom:1px solid #D3D9E1"></div>
<div class="t" style="left:30px;top:582px;color:#000">Обработка.РасчетПотребностей.МодульМенеджера</div>
<div class="t r" style="left:340px;width:251px;top:582px;color:#000">2 892</div>
<div class="t" style="left:600px;width:592px;overflow:hidden;top:582px;color:#000">НоваяСтрока = Строки.Добавить();</div>
<div class="t r" style="left:1198px;width:66px;top:582px;color:#000">53 740</div>
<div class="t r" style="left:1270px;width:194px;top:582px;color:#000">0,134755</div>
<div class="t r" style="left:1470px;width:121px;top:582px;color:#000">0,03</div>
<div class="a" style="left:27px;top:597px;width:1568px;height:19px;background:#FFFFFF;border-bottom:1px solid #D3D9E1"></div>
<div class="t" style="left:30px;top:601px;color:#000">Обработка.РасчетПотребностей.МодульМенеджера</div>
<div class="t r" style="left:340px;width:251px;top:601px;color:#000">2 498</div>
<div class="t" style="left:600px;width:592px;overflow:hidden;top:601px;color:#000">ЗаполнитьЗначенияСвойств(НоваяСтрока, СтрокаИсточника, &quot;СпособПополнения, Источник, Договор, Лимит, Ви…</div>
<div class="t r" style="left:1198px;width:66px;top:601px;color:#000">6 523</div>
<div class="t r" style="left:1270px;width:194px;top:601px;color:#000">0,131265</div>
<div class="t r" style="left:1470px;width:121px;top:601px;color:#000">0,02</div>
<div class="a" style="left:27px;top:616px;width:1568px;height:19px;background:#FFFFFF;border-bottom:1px solid #D3D9E1"></div>
<div class="t" style="left:30px;top:620px;color:#000">ОбщийМодуль.ОценкаПроизводительности.Модуль</div>
<div class="t r" style="left:340px;width:251px;top:620px;color:#000">745</div>
<div class="t" style="left:600px;width:592px;overflow:hidden;top:620px;color:#000">Запись.Записать();</div>
<div class="t r" style="left:1198px;width:66px;top:620px;color:#000">1</div>
<div class="t r" style="left:1270px;width:194px;top:620px;color:#000">0,131232</div>
<div class="t r" style="left:1470px;width:121px;top:620px;color:#000">0,02</div>
<div class="a" style="left:27px;top:635px;width:1568px;height:19px;background:#FFFFFF;border-bottom:1px solid #D3D9E1"></div>
<div class="t" style="left:30px;top:639px;color:#000">Обработка.РасчетПотребностей.МодульМенеджера</div>
<div class="t r" style="left:340px;width:251px;top:639px;color:#000">798</div>
<div class="t" style="left:600px;width:592px;overflow:hidden;top:639px;color:#000">КонецЦикла;</div>
<div class="t r" style="left:1198px;width:66px;top:639px;color:#000">161 220</div>
<div class="t r" style="left:1270px;width:194px;top:639px;color:#000">0,129183</div>
<div class="t r" style="left:1470px;width:121px;top:639px;color:#000">0,02</div>
<div class="a" style="left:27px;top:654px;width:1568px;height:19px;background:#FFFFFF;border-bottom:1px solid #D3D9E1"></div>
<div class="t" style="left:30px;top:658px;color:#000">Обработка.РасчетПотребностей.МодульМенеджера</div>
<div class="t r" style="left:340px;width:251px;top:658px;color:#000">1 022</div>
<div class="t" style="left:600px;width:592px;overflow:hidden;top:658px;color:#000">СтруктураИтогов[КлючИЗначение.Ключ] = СтруктураИтогов[КлючИЗначение.Ключ] + ИтогиВложенных[КлючИЗнач…</div>
<div class="t r" style="left:1198px;width:66px;top:658px;color:#000">53 740</div>
<div class="t r" style="left:1270px;width:194px;top:658px;color:#000">0,128384</div>
<div class="t r" style="left:1470px;width:121px;top:658px;color:#000">0,02</div>
<div class="a" style="left:27px;top:673px;width:1568px;height:19px;background:#FFFFFF;border-bottom:1px solid #D3D9E1"></div>
<div class="t" style="left:30px;top:677px;color:#000">Обработка.РасчетПотребностей.МодульМенеджера</div>
<div class="t r" style="left:340px;width:251px;top:677px;color:#000">967</div>
<div class="t" style="left:600px;width:592px;overflow:hidden;top:677px;color:#000">Если ЗначениеЗаполнено(СтруктураСтрок.НачальныйОстаток[ИмяКолонки]) Тогда</div>
<div class="t r" style="left:1198px;width:66px;top:677px;color:#000">53 740</div>
<div class="t r" style="left:1270px;width:194px;top:677px;color:#000">0,124133</div>
<div class="t r" style="left:1470px;width:121px;top:677px;color:#000">0,02</div>
<div class="a" style="left:27px;top:692px;width:1568px;height:19px;background:#FFFFFF;border-bottom:1px solid #D3D9E1"></div>
<div class="t" style="left:30px;top:696px;color:#000">Обработка.РасчетПотребностей.МодульМенеджера</div>
<div class="t r" style="left:340px;width:251px;top:696px;color:#000">2 909</div>
<div class="t" style="left:600px;width:592px;overflow:hidden;top:696px;color:#000">СтруктураСтрок.Вставить(Имя, НоваяСтрока);</div>
<div class="t r" style="left:1198px;width:66px;top:696px;color:#000">53 740</div>
<div class="t r" style="left:1270px;width:194px;top:696px;color:#000">0,122097</div>
<div class="t r" style="left:1470px;width:121px;top:696px;color:#000">0,02</div>
<div class="a" style="left:27px;top:711px;width:1568px;height:19px;background:#FFFFFF;border-bottom:1px solid #D3D9E1"></div>
<div class="t" style="left:30px;top:715px;color:#000">Обработка.РасчетПотребностей.МодульМенеджера</div>
<div class="t r" style="left:340px;width:251px;top:715px;color:#000">915</div>
<div class="t" style="left:600px;width:592px;overflow:hidden;top:715px;color:#000">СтруктураСтрок.НачальныйОстаток[ИмяКолонки] = СтруктураСтрок.НачальныйОстаток[ИмяКолонки]</div>
<div class="t r" style="left:1198px;width:66px;top:715px;color:#000">23 916</div>
<div class="t r" style="left:1270px;width:194px;top:715px;color:#000">0,114466</div>
<div class="t r" style="left:1470px;width:121px;top:715px;color:#000">0,02</div>
<div class="a" style="left:27px;top:730px;width:1568px;height:19px;background:#FFFFFF;border-bottom:1px solid #D3D9E1"></div>
<div class="t" style="left:30px;top:734px;color:#000">Обработка.РасчетПотребностей.МодульМенеджера</div>
<div class="t r" style="left:340px;width:251px;top:734px;color:#000">986</div>
<div class="t" style="left:600px;width:592px;overflow:hidden;top:734px;color:#000">Если СтруктураСтрок.КонечныйОстаток[ИмяКолонки] &lt; 0 Тогда</div>
<div class="t r" style="left:1198px;width:66px;top:734px;color:#000">53 740</div>
<div class="t r" style="left:1270px;width:194px;top:734px;color:#000">0,110933</div>
<div class="t r" style="left:1470px;width:121px;top:734px;color:#000">0,02</div>
<div class="a" style="left:27px;top:749px;width:1568px;height:19px;background:#FFFFFF;border-bottom:1px solid #D3D9E1"></div>
<div class="t" style="left:30px;top:753px;color:#000">Обработка.РасчетПотребностей.МодульМенеджера</div>
<div class="t r" style="left:340px;width:251px;top:753px;color:#000">958</div>
<div class="t" style="left:600px;width:592px;overflow:hidden;top:753px;color:#000">СтруктураСтрок.Вставить(Строка.ИмяГруппировки, Строка);</div>
<div class="t r" style="left:1198px;width:66px;top:753px;color:#000">53 740</div>
<div class="t r" style="left:1270px;width:194px;top:753px;color:#000">0,110132</div>
<div class="t r" style="left:1470px;width:121px;top:753px;color:#000">0,02</div>
<div class="a" style="left:27px;top:768px;width:1568px;height:19px;background:#FFFFFF;border-bottom:1px solid #D3D9E1"></div>
<div class="t" style="left:30px;top:772px;color:#000">Обработка.РасчетПотребностей.МодульМенеджера</div>
<div class="t r" style="left:340px;width:251px;top:772px;color:#000">3 820</div>
<div class="t" style="left:600px;width:592px;overflow:hidden;top:772px;color:#000">ЗаполнитьЗначенияСвойств(НоваяСтрока, ВыборкаХарактеристики);</div>
<div class="t r" style="left:1198px;width:66px;top:772px;color:#000">12 322</div>
<div class="t r" style="left:1270px;width:194px;top:772px;color:#000">0,107185</div>
<div class="t r" style="left:1470px;width:121px;top:772px;color:#000">0,02</div>
<div class="a" style="left:27px;top:787px;width:1568px;height:19px;background:#FFFFFF;border-bottom:1px solid #D3D9E1"></div>
<div class="t" style="left:30px;top:791px;color:#000">Обработка.РасчетПотребностей.МодульМенеджера</div>
<div class="t r" style="left:340px;width:251px;top:791px;color:#000">891</div>
<div class="t" style="left:600px;width:592px;overflow:hidden;top:791px;color:#000">Если СтрокаДерева.Строки.Количество() &gt; 0 Тогда</div>
<div class="t r" style="left:1198px;width:66px;top:791px;color:#000">47 817</div>
<div class="t r" style="left:1270px;width:194px;top:791px;color:#000">0,104851</div>
<div class="t r" style="left:1470px;width:121px;top:791px;color:#000">0,02</div>
<div class="a" style="left:27px;top:806px;width:1568px;height:19px;background:#FFFFFF;border-bottom:1px solid #D3D9E1"></div>
<div class="t" style="left:30px;top:810px;color:#000">Обработка.РасчетПотребностей.МодульМенеджера</div>
<div class="t r" style="left:340px;width:251px;top:810px;color:#000">1 021</div>
<div class="t" style="left:600px;width:592px;overflow:hidden;top:810px;color:#000">Для каждого КлючИЗначение Из СтруктураИтогов Цикл</div>
<div class="t r" style="left:1198px;width:66px;top:810px;color:#000">67 175</div>
<div class="t r" style="left:1270px;width:194px;top:810px;color:#000">0,104126</div>
<div class="t r" style="left:1470px;width:121px;top:810px;color:#000">0,02</div>
<div class="a" style="left:27px;top:825px;width:1568px;height:19px;background:#FFFFFF;border-bottom:1px solid #D3D9E1"></div>
<div class="t" style="left:30px;top:829px;color:#000">Обработка.РасчетПотребностей.МодульМенеджера</div>
<div class="t r" style="left:340px;width:251px;top:829px;color:#000">2 907</div>
<div class="t" style="left:600px;width:592px;overflow:hidden;top:829px;color:#000">НоваяСтрока.НевозможноОбеспечить    = 0;</div>
<div class="t r" style="left:1198px;width:66px;top:829px;color:#000">53 740</div>
<div class="t r" style="left:1270px;width:194px;top:829px;color:#000">0,101003</div>
<div class="t r" style="left:1470px;width:121px;top:829px;color:#000">0,02</div>
<div class="a" style="left:27px;top:844px;width:1568px;height:19px;background:#FFFFFF;border-bottom:1px solid #D3D9E1"></div>
<div class="t" style="left:30px;top:848px;color:#000">Обработка.РасчетПотребностей.МодульМенеджера</div>
<div class="t r" style="left:340px;width:251px;top:848px;color:#000">2 745</div>
<div class="t" style="left:600px;width:592px;overflow:hidden;top:848px;color:#000">Выборка = Запрос.Выполнить().Выбрать();</div>
<div class="t r" style="left:1198px;width:66px;top:848px;color:#000">1</div>
<div class="t r" style="left:1270px;width:194px;top:848px;color:#000">0,100326</div>
<div class="t r" style="left:1470px;width:121px;top:848px;color:#000">0,02</div>
<div class="a" style="left:27px;top:863px;width:1568px;height:19px;background:#FFFFFF;border-bottom:1px solid #D3D9E1"></div>
<div class="t" style="left:30px;top:867px;color:#000">Обработка.РасчетПотребностей.МодульМенеджера</div>
<div class="t r" style="left:340px;width:251px;top:867px;color:#000">950</div>
<div class="t" style="left:600px;width:592px;overflow:hidden;top:867px;color:#000">СтруктураИтогов.Вставить(ИмяКолонки, 0);</div>
<div class="t r" style="left:1198px;width:66px;top:867px;color:#000">53 744</div>
<div class="t r" style="left:1270px;width:194px;top:867px;color:#000">0,099653</div>
<div class="t r" style="left:1470px;width:121px;top:867px;color:#000">0,02</div>
<div class="a" style="left:27px;top:882px;width:1568px;height:19px;background:#FFFFFF;border-bottom:1px solid #D3D9E1"></div>
<div class="t" style="left:30px;top:886px;color:#000">Обработка.РасчетПотребностей.МодульМенеджера</div>
<div class="t r" style="left:340px;width:251px;top:886px;color:#000">924</div>
<div class="t" style="left:600px;width:592px;overflow:hidden;top:886px;color:#000">СтруктураСтрок.Поступление[ИмяКолонки] = СтруктураСтрок.Поступление[ИмяКолонки] + СтрокаДерева.Поступ…</div>
<div class="t r" style="left:1198px;width:66px;top:886px;color:#000">23 916</div>
<div class="t r" style="left:1270px;width:194px;top:886px;color:#000">0,099469</div>
<div class="t r" style="left:1470px;width:121px;top:886px;color:#000">0,02</div>
<div class="a" style="left:27px;top:901px;width:1568px;height:19px;background:#FFFFFF;border-bottom:1px solid #D3D9E1"></div>
<div class="t" style="left:30px;top:905px;color:#000">Обработка.РасчетПотребностей.МодульМенеджера</div>
<div class="t r" style="left:340px;width:251px;top:905px;color:#000">2 299</div>
<div class="t" style="left:600px;width:592px;overflow:hidden;top:905px;color:#000">Параметры.Вставить(&quot;ВалютаУчета&quot;, Константы.ВалютаУчета.Получить());</div>
<div class="t r" style="left:1198px;width:66px;top:905px;color:#000">1</div>
<div class="t r" style="left:1270px;width:194px;top:905px;color:#000">0,097462</div>
<div class="t r" style="left:1470px;width:121px;top:905px;color:#000">0,02</div>
<div class="a" style="left:27px;top:141px;width:1568px;height:18px;border:1px dotted #D0A838"></div>
<div class="a" style="left:328px;top:141px;width:1px;height:779px;background:#D3D9E1;opacity:0.9"></div>
<div class="a" style="left:595px;top:141px;width:1px;height:779px;background:#D3D9E1;opacity:0.9"></div>
<div class="a" style="left:1195px;top:141px;width:1px;height:779px;background:#D3D9E1;opacity:0.9"></div>
<div class="a" style="left:1268px;top:141px;width:1px;height:779px;background:#D3D9E1;opacity:0.9"></div>
<div class="a" style="left:1468px;top:141px;width:1px;height:779px;background:#D3D9E1;opacity:0.9"></div>
<div class="a" style="left:27px;top:919px;width:1584px;height:21px;background:linear-gradient(#FBF8EC,#F4EED6 50%,#ECE4C2);border-top:1px solid #CFC49A"></div>
<div class="a" style="left:328px;top:920px;width:1px;height:20px;background:#CFC49A"></div>
<div class="a" style="left:595px;top:920px;width:1px;height:20px;background:#CFC49A"></div>
<div class="a" style="left:1195px;top:920px;width:1px;height:20px;background:#CFC49A"></div>
<div class="a" style="left:1268px;top:920px;width:1px;height:20px;background:#CFC49A"></div>
<div class="a" style="left:1468px;top:920px;width:1px;height:20px;background:#CFC49A"></div>
<div class="a" style="left:1595px;top:920px;width:1px;height:20px;background:#CFC49A"></div>
<div class="t r" style="left:1198px;width:66px;top:924px;color:#4E4016">2</div>
<div class="t r" style="left:1270px;width:194px;top:924px;color:#4E4016">491,694464</div>
<div class="t r" style="left:1470px;width:121px;top:924px;color:#4E4016">92,28</div>
<div class="a" style="left:1595px;top:120px;width:16px;height:799px;background:#F8F7F0;border-left:1px solid #B5AD85"></div>
<div class="a" style="left:1596px;top:120px;width:15px;height:21px;background:linear-gradient(90deg,#FEFDF8,#F4F0DC 60%,#EAE3C4);border-bottom:1px solid #B5AD85"></div>
<svg style="left:1600px;top:126px" width="7" height="7" viewBox="0 0 7 7"><path d="M0 7 H7 L3.5 0Z" fill="#C8C6B8"/></svg>
<div class="a" style="left:1596px;top:141px;width:15px;height:15px;background:linear-gradient(90deg,#FEFDF8,#F4F0DC 60%,#EAE3C4);border-bottom:1px solid #B5AD85"></div>
<div class="a" style="left:1601px;top:146px;width:5px;height:5px;border-radius:50%;border:1px solid #D2CFC0"></div>
<div class="a" style="left:1596px;top:920px;width:15px;height:20px;background:linear-gradient(90deg,#FEFDF8,#F4F0DC 60%,#EAE3C4)"></div>
<svg style="left:1599px;top:926px" width="9" height="8" viewBox="0 0 9 8"><path d="M0 0 H9 L4.5 8Z" fill="#8E8E8E"/></svg>
<div class="a" style="left:26px;top:940px;width:1586px;height:55px;background:#FBF8EA;border-bottom:1px solid #fff"></div>
<div class="t hd" style="left:36px;top:950px">Кол.</div>
<div class="a" style="left:82px;top:946px;width:59px;height:19px;border:1px solid #CABF9A;border-radius:3px;background:#F8F5E8"></div>
<div class="t r" style="left:84px;width:55px;top:950px;color:#000">2</div>
<div class="t hd" style="left:151px;top:950px">Врем.</div>
<div class="a" style="left:197px;top:946px;width:60px;height:19px;border:1px solid #CABF9A;border-radius:3px;background:#fff;overflow:hidden"><div class="t r" style="right:3px;top:3px;color:#000">491,694464</div></div>
<div class="t hd" style="left:266px;top:950px">%(Врем.)</div>
<div class="a" style="left:36px;top:973px;width:13px;height:13px;border:1px solid #8E8A7A;border-radius:2px;background:#fff"></div>
<div class="t hd" style="left:52px;top:974px">Для вызова процедур и функций включать время вы</div>
<div class="a" style="left:0;top:996px;width:1614px;height:24px;background:#F4F1DE;border-top:1px solid #fff"></div>
<div class="a" style="left:1px;top:998px;width:172px;height:20px;background:#B6CDE6;border:1px solid #C9BD92"></div>
<svg style="left:4px;top:1001px" width="14" height="14" viewBox="0 0 15 15"><defs><radialGradient id="swg" cx="0.35" cy="0.35" r="0.8"><stop offset="0" stop-color="#FFFFFF"/><stop offset="1" stop-color="#B8DCF2"/></radialGradient></defs><ellipse cx="7.5" cy="0.9" rx="2" ry="0.8" fill="#333"/><path d="M1.2 3.2 L2.6 1.8 M13.8 3.2 L12.4 1.8" stroke="#333" stroke-width="1.4"/><circle cx="7.5" cy="8.3" r="6.2" fill="url(#swg)" stroke="#4C6C8A" stroke-width="1.2"/><circle cx="12.60" cy="8.30" r="0.7" fill="#E86A5A"/><circle cx="11.92" cy="10.85" r="0.7" fill="#E86A5A"/><circle cx="10.05" cy="12.72" r="0.7" fill="#E86A5A"/><circle cx="7.50" cy="13.40" r="0.7" fill="#E86A5A"/><circle cx="4.95" cy="12.72" r="0.7" fill="#E86A5A"/><circle cx="3.08" cy="10.85" r="0.7" fill="#E86A5A"/><circle cx="2.40" cy="8.30" r="0.7" fill="#E86A5A"/><circle cx="3.08" cy="5.75" r="0.7" fill="#E86A5A"/><circle cx="4.95" cy="3.88" r="0.7" fill="#E86A5A"/><circle cx="7.50" cy="3.20" r="0.7" fill="#E86A5A"/><circle cx="10.05" cy="3.88" r="0.7" fill="#E86A5A"/><circle cx="11.92" cy="5.75" r="0.7" fill="#E86A5A"/><path d="M7.5 2.8 V8.3 L10.8 11.2" stroke="#2F6A9E" stroke-width="1.2" fill="none"/><circle cx="7.5" cy="8.3" r="0.8" fill="#222"/></svg>
<div class="t" style="left:19px;top:1003px;color:#2A3050">C:\Users\Nikolaev_A\Docum…</div>
<div class="a" style="left:0;top:1020px;width:1614px;height:21px;background:#F4F1DE"></div>
<div class="a" style="left:1px;top:1020px;width:1511px;height:19px;border:1px solid #DCD6BC"></div>
<div class="t hd" style="left:4px;top:1024px;color:#1E1A0A">Для получения подсказки нажмите F1</div>
<div class="a" style="left:1517px;top:1020px;width:29px;height:19px;border:1px solid #DCD6BC"></div>
<div class="t" style="left:1519px;top:1024px;color:#A89870">CAP</div>
<div class="a" style="left:1551px;top:1020px;width:33px;height:19px;border:1px solid #DCD6BC"></div>
<div class="t" style="left:1554px;top:1024px;color:#A89870">NUM</div>
<div class="a" style="left:1589px;top:1020px;width:25px;height:19px;border:1px solid #DCD6BC"></div>
<div class="t" style="left:1591px;top:1024px;color:#1E1A0A">ru</div>
<svg style="left:1604px;top:1029px" width="5" height="3" viewBox="0 0 5 3"><path d="M0 0 H5 L2.5 3Z" fill="#1E1A0A"/></svg>
<div class="a" style="left:0;top:1040px;width:1614px;height:1px;background:#1C2A30"></div>
<div class="a" style="left:48px;top:1040px;width:265px;height:1px;background:#C4C4C4"></div>
<div class="a" style="left:485px;top:1040px;width:45px;height:1px;background:#8A9298"></div>
<svg style="left:0;top:0" width="1614" height="1041" viewBox="0 0 1614 1041">
<polygon points="313.6,-19.5 323.6,-9.5 313.6,0.5 323.6,10.5 313.6,20.5 323.6,30.5 313.6,40.5 323.6,50.5 313.6,60.5 323.6,70.5 313.6,80.5 323.6,90.5 313.6,100.5 323.6,110.5 313.6,120.5 323.6,130.5 313.6,140.5 323.6,150.5 313.6,160.5 323.6,170.5 313.6,180.5 323.6,190.5 313.6,200.5 323.6,210.5 313.6,220.5 323.6,230.5 313.6,240.5 323.6,250.5 313.6,260.5 323.6,270.5 313.6,280.5 323.6,290.5 313.6,300.5 323.6,310.5 313.6,320.5 323.6,330.5 313.6,340.5 323.6,350.5 313.6,360.5 323.6,370.5 313.6,380.5 323.6,390.5 313.6,400.5 323.6,410.5 313.6,420.5 323.6,430.5 313.6,440.5 323.6,450.5 313.6,460.5 323.6,470.5 313.6,480.5 323.6,490.5 313.6,500.5 323.6,510.5 313.6,520.5 323.6,530.5 313.6,540.5 323.6,550.5 313.6,560.5 323.6,570.5 313.6,580.5 323.6,590.5 313.6,600.5 323.6,610.5 313.6,620.5 323.6,630.5 313.6,640.5 323.6,650.5 313.6,660.5 323.6,670.5 313.6,680.5 323.6,690.5 313.6,700.5 323.6,710.5 313.6,720.5 323.6,730.5 313.6,740.5 323.6,750.5 313.6,760.5 323.6,770.5 313.6,780.5 323.6,790.5 313.6,800.5 323.6,810.5 313.6,820.5 323.6,830.5 313.6,840.5 323.6,850.5 313.6,860.5 323.6,870.5 313.6,880.5 323.6,890.5 313.6,900.5 323.6,910.5 313.6,920.5 323.6,930.5 313.6,940.5 323.6,950.5 313.6,960.5 323.6,970.5 313.6,980.5 323.6,990.5 313.6,1000.5 323.6,1010.5 313.6,1020.5 323.6,1030.5 313.6,1040.5 323.6,1050.5 313.6,1060.5 323.6,1070.5 333.6,1070.5 323.6,1060.5 333.6,1050.5 323.6,1040.5 333.6,1030.5 323.6,1020.5 333.6,1010.5 323.6,1000.5 333.6,990.5 323.6,980.5 333.6,970.5 323.6,960.5 333.6,950.5 323.6,940.5 333.6,930.5 323.6,920.5 333.6,910.5 323.6,900.5 333.6,890.5 323.6,880.5 333.6,870.5 323.6,860.5 333.6,850.5 323.6,840.5 333.6,830.5 323.6,820.5 333.6,810.5 323.6,800.5 333.6,790.5 323.6,780.5 333.6,770.5 323.6,760.5 333.6,750.5 323.6,740.5 333.6,730.5 323.6,720.5 333.6,710.5 323.6,700.5 333.6,690.5 323.6,680.5 333.6,670.5 323.6,660.5 333.6,650.5 323.6,640.5 333.6,630.5 323.6,620.5 333.6,610.5 323.6,600.5 333.6,590.5 323.6,580.5 333.6,570.5 323.6,560.5 333.6,550.5 323.6,540.5 333.6,530.5 323.6,520.5 333.6,510.5 323.6,500.5 333.6,490.5 323.6,480.5 333.6,470.5 323.6,460.5 333.6,450.5 323.6,440.5 333.6,430.5 323.6,420.5 333.6,410.5 323.6,400.5 333.6,390.5 323.6,380.5 333.6,370.5 323.6,360.5 333.6,350.5 323.6,340.5 333.6,330.5 323.6,320.5 333.6,310.5 323.6,300.5 333.6,290.5 323.6,280.5 333.6,270.5 323.6,260.5 333.6,250.5 323.6,240.5 333.6,230.5 323.6,220.5 333.6,210.5 323.6,200.5 333.6,190.5 323.6,180.5 333.6,170.5 323.6,160.5 333.6,150.5 323.6,140.5 333.6,130.5 323.6,120.5 333.6,110.5 323.6,100.5 333.6,90.5 323.6,80.5 333.6,70.5 323.6,60.5 333.6,50.5 323.6,40.5 333.6,30.5 323.6,20.5 333.6,10.5 323.6,0.5 333.6,-9.5 323.6,-19.5" fill="#fff"/><polyline points="313.6,-19.5 323.6,-9.5 313.6,0.5 323.6,10.5 313.6,20.5 323.6,30.5 313.6,40.5 323.6,50.5 313.6,60.5 323.6,70.5 313.6,80.5 323.6,90.5 313.6,100.5 323.6,110.5 313.6,120.5 323.6,130.5 313.6,140.5 323.6,150.5 313.6,160.5 323.6,170.5 313.6,180.5 323.6,190.5 313.6,200.5 323.6,210.5 313.6,220.5 323.6,230.5 313.6,240.5 323.6,250.5 313.6,260.5 323.6,270.5 313.6,280.5 323.6,290.5 313.6,300.5 323.6,310.5 313.6,320.5 323.6,330.5 313.6,340.5 323.6,350.5 313.6,360.5 323.6,370.5 313.6,380.5 323.6,390.5 313.6,400.5 323.6,410.5 313.6,420.5 323.6,430.5 313.6,440.5 323.6,450.5 313.6,460.5 323.6,470.5 313.6,480.5 323.6,490.5 313.6,500.5 323.6,510.5 313.6,520.5 323.6,530.5 313.6,540.5 323.6,550.5 313.6,560.5 323.6,570.5 313.6,580.5 323.6,590.5 313.6,600.5 323.6,610.5 313.6,620.5 323.6,630.5 313.6,640.5 323.6,650.5 313.6,660.5 323.6,670.5 313.6,680.5 323.6,690.5 313.6,700.5 323.6,710.5 313.6,720.5 323.6,730.5 313.6,740.5 323.6,750.5 313.6,760.5 323.6,770.5 313.6,780.5 323.6,790.5 313.6,800.5 323.6,810.5 313.6,820.5 323.6,830.5 313.6,840.5 323.6,850.5 313.6,860.5 323.6,870.5 313.6,880.5 323.6,890.5 313.6,900.5 323.6,910.5 313.6,920.5 323.6,930.5 313.6,940.5 323.6,950.5 313.6,960.5 323.6,970.5 313.6,980.5 323.6,990.5 313.6,1000.5 323.6,1010.5 313.6,1020.5 323.6,1030.5 313.6,1040.5 323.6,1050.5 313.6,1060.5 323.6,1070.5" fill="none" stroke="#A4A4A4" stroke-width="2"/><polyline points="323.6,-19.5 333.6,-9.5 323.6,0.5 333.6,10.5 323.6,20.5 333.6,30.5 323.6,40.5 333.6,50.5 323.6,60.5 333.6,70.5 323.6,80.5 333.6,90.5 323.6,100.5 333.6,110.5 323.6,120.5 333.6,130.5 323.6,140.5 333.6,150.5 323.6,160.5 333.6,170.5 323.6,180.5 333.6,190.5 323.6,200.5 333.6,210.5 323.6,220.5 333.6,230.5 323.6,240.5 333.6,250.5 323.6,260.5 333.6,270.5 323.6,280.5 333.6,290.5 323.6,300.5 333.6,310.5 323.6,320.5 333.6,330.5 323.6,340.5 333.6,350.5 323.6,360.5 333.6,370.5 323.6,380.5 333.6,390.5 323.6,400.5 333.6,410.5 323.6,420.5 333.6,430.5 323.6,440.5 333.6,450.5 323.6,460.5 333.6,470.5 323.6,480.5 333.6,490.5 323.6,500.5 333.6,510.5 323.6,520.5 333.6,530.5 323.6,540.5 333.6,550.5 323.6,560.5 333.6,570.5 323.6,580.5 333.6,590.5 323.6,600.5 333.6,610.5 323.6,620.5 333.6,630.5 323.6,640.5 333.6,650.5 323.6,660.5 333.6,670.5 323.6,680.5 333.6,690.5 323.6,700.5 333.6,710.5 323.6,720.5 333.6,730.5 323.6,740.5 333.6,750.5 323.6,760.5 333.6,770.5 323.6,780.5 333.6,790.5 323.6,800.5 333.6,810.5 323.6,820.5 333.6,830.5 323.6,840.5 333.6,850.5 323.6,860.5 333.6,870.5 323.6,880.5 333.6,890.5 323.6,900.5 333.6,910.5 323.6,920.5 333.6,930.5 323.6,940.5 333.6,950.5 323.6,960.5 333.6,970.5 323.6,980.5 333.6,990.5 323.6,1000.5 333.6,1010.5 323.6,1020.5 333.6,1030.5 323.6,1040.5 333.6,1050.5 323.6,1060.5 333.6,1070.5" fill="none" stroke="#A4A4A4" stroke-width="2"/><path d="M313.6 0.5 H323.6 M313.6 1040.5 H323.6" stroke="#A4A4A4" stroke-width="2"/>
<polygon points="1197.6,-19.5 1207.6,-9.5 1197.6,0.5 1207.6,10.5 1197.6,20.5 1207.6,30.5 1197.6,40.5 1207.6,50.5 1197.6,60.5 1207.6,70.5 1197.6,80.5 1207.6,90.5 1197.6,100.5 1207.6,110.5 1197.6,120.5 1207.6,130.5 1197.6,140.5 1207.6,150.5 1197.6,160.5 1207.6,170.5 1197.6,180.5 1207.6,190.5 1197.6,200.5 1207.6,210.5 1197.6,220.5 1207.6,230.5 1197.6,240.5 1207.6,250.5 1197.6,260.5 1207.6,270.5 1197.6,280.5 1207.6,290.5 1197.6,300.5 1207.6,310.5 1197.6,320.5 1207.6,330.5 1197.6,340.5 1207.6,350.5 1197.6,360.5 1207.6,370.5 1197.6,380.5 1207.6,390.5 1197.6,400.5 1207.6,410.5 1197.6,420.5 1207.6,430.5 1197.6,440.5 1207.6,450.5 1197.6,460.5 1207.6,470.5 1197.6,480.5 1207.6,490.5 1197.6,500.5 1207.6,510.5 1197.6,520.5 1207.6,530.5 1197.6,540.5 1207.6,550.5 1197.6,560.5 1207.6,570.5 1197.6,580.5 1207.6,590.5 1197.6,600.5 1207.6,610.5 1197.6,620.5 1207.6,630.5 1197.6,640.5 1207.6,650.5 1197.6,660.5 1207.6,670.5 1197.6,680.5 1207.6,690.5 1197.6,700.5 1207.6,710.5 1197.6,720.5 1207.6,730.5 1197.6,740.5 1207.6,750.5 1197.6,760.5 1207.6,770.5 1197.6,780.5 1207.6,790.5 1197.6,800.5 1207.6,810.5 1197.6,820.5 1207.6,830.5 1197.6,840.5 1207.6,850.5 1197.6,860.5 1207.6,870.5 1197.6,880.5 1207.6,890.5 1197.6,900.5 1207.6,910.5 1197.6,920.5 1207.6,930.5 1197.6,940.5 1207.6,950.5 1197.6,960.5 1207.6,970.5 1197.6,980.5 1207.6,990.5 1197.6,1000.5 1207.6,1010.5 1197.6,1020.5 1207.6,1030.5 1197.6,1040.5 1207.6,1050.5 1197.6,1060.5 1207.6,1070.5 1217.6,1070.5 1207.6,1060.5 1217.6,1050.5 1207.6,1040.5 1217.6,1030.5 1207.6,1020.5 1217.6,1010.5 1207.6,1000.5 1217.6,990.5 1207.6,980.5 1217.6,970.5 1207.6,960.5 1217.6,950.5 1207.6,940.5 1217.6,930.5 1207.6,920.5 1217.6,910.5 1207.6,900.5 1217.6,890.5 1207.6,880.5 1217.6,870.5 1207.6,860.5 1217.6,850.5 1207.6,840.5 1217.6,830.5 1207.6,820.5 1217.6,810.5 1207.6,800.5 1217.6,790.5 1207.6,780.5 1217.6,770.5 1207.6,760.5 1217.6,750.5 1207.6,740.5 1217.6,730.5 1207.6,720.5 1217.6,710.5 1207.6,700.5 1217.6,690.5 1207.6,680.5 1217.6,670.5 1207.6,660.5 1217.6,650.5 1207.6,640.5 1217.6,630.5 1207.6,620.5 1217.6,610.5 1207.6,600.5 1217.6,590.5 1207.6,580.5 1217.6,570.5 1207.6,560.5 1217.6,550.5 1207.6,540.5 1217.6,530.5 1207.6,520.5 1217.6,510.5 1207.6,500.5 1217.6,490.5 1207.6,480.5 1217.6,470.5 1207.6,460.5 1217.6,450.5 1207.6,440.5 1217.6,430.5 1207.6,420.5 1217.6,410.5 1207.6,400.5 1217.6,390.5 1207.6,380.5 1217.6,370.5 1207.6,360.5 1217.6,350.5 1207.6,340.5 1217.6,330.5 1207.6,320.5 1217.6,310.5 1207.6,300.5 1217.6,290.5 1207.6,280.5 1217.6,270.5 1207.6,260.5 1217.6,250.5 1207.6,240.5 1217.6,230.5 1207.6,220.5 1217.6,210.5 1207.6,200.5 1217.6,190.5 1207.6,180.5 1217.6,170.5 1207.6,160.5 1217.6,150.5 1207.6,140.5 1217.6,130.5 1207.6,120.5 1217.6,110.5 1207.6,100.5 1217.6,90.5 1207.6,80.5 1217.6,70.5 1207.6,60.5 1217.6,50.5 1207.6,40.5 1217.6,30.5 1207.6,20.5 1217.6,10.5 1207.6,0.5 1217.6,-9.5 1207.6,-19.5" fill="#fff"/><polyline points="1197.6,-19.5 1207.6,-9.5 1197.6,0.5 1207.6,10.5 1197.6,20.5 1207.6,30.5 1197.6,40.5 1207.6,50.5 1197.6,60.5 1207.6,70.5 1197.6,80.5 1207.6,90.5 1197.6,100.5 1207.6,110.5 1197.6,120.5 1207.6,130.5 1197.6,140.5 1207.6,150.5 1197.6,160.5 1207.6,170.5 1197.6,180.5 1207.6,190.5 1197.6,200.5 1207.6,210.5 1197.6,220.5 1207.6,230.5 1197.6,240.5 1207.6,250.5 1197.6,260.5 1207.6,270.5 1197.6,280.5 1207.6,290.5 1197.6,300.5 1207.6,310.5 1197.6,320.5 1207.6,330.5 1197.6,340.5 1207.6,350.5 1197.6,360.5 1207.6,370.5 1197.6,380.5 1207.6,390.5 1197.6,400.5 1207.6,410.5 1197.6,420.5 1207.6,430.5 1197.6,440.5 1207.6,450.5 1197.6,460.5 1207.6,470.5 1197.6,480.5 1207.6,490.5 1197.6,500.5 1207.6,510.5 1197.6,520.5 1207.6,530.5 1197.6,540.5 1207.6,550.5 1197.6,560.5 1207.6,570.5 1197.6,580.5 1207.6,590.5 1197.6,600.5 1207.6,610.5 1197.6,620.5 1207.6,630.5 1197.6,640.5 1207.6,650.5 1197.6,660.5 1207.6,670.5 1197.6,680.5 1207.6,690.5 1197.6,700.5 1207.6,710.5 1197.6,720.5 1207.6,730.5 1197.6,740.5 1207.6,750.5 1197.6,760.5 1207.6,770.5 1197.6,780.5 1207.6,790.5 1197.6,800.5 1207.6,810.5 1197.6,820.5 1207.6,830.5 1197.6,840.5 1207.6,850.5 1197.6,860.5 1207.6,870.5 1197.6,880.5 1207.6,890.5 1197.6,900.5 1207.6,910.5 1197.6,920.5 1207.6,930.5 1197.6,940.5 1207.6,950.5 1197.6,960.5 1207.6,970.5 1197.6,980.5 1207.6,990.5 1197.6,1000.5 1207.6,1010.5 1197.6,1020.5 1207.6,1030.5 1197.6,1040.5 1207.6,1050.5 1197.6,1060.5 1207.6,1070.5" fill="none" stroke="#A4A4A4" stroke-width="2"/><polyline points="1207.6,-19.5 1217.6,-9.5 1207.6,0.5 1217.6,10.5 1207.6,20.5 1217.6,30.5 1207.6,40.5 1217.6,50.5 1207.6,60.5 1217.6,70.5 1207.6,80.5 1217.6,90.5 1207.6,100.5 1217.6,110.5 1207.6,120.5 1217.6,130.5 1207.6,140.5 1217.6,150.5 1207.6,160.5 1217.6,170.5 1207.6,180.5 1217.6,190.5 1207.6,200.5 1217.6,210.5 1207.6,220.5 1217.6,230.5 1207.6,240.5 1217.6,250.5 1207.6,260.5 1217.6,270.5 1207.6,280.5 1217.6,290.5 1207.6,300.5 1217.6,310.5 1207.6,320.5 1217.6,330.5 1207.6,340.5 1217.6,350.5 1207.6,360.5 1217.6,370.5 1207.6,380.5 1217.6,390.5 1207.6,400.5 1217.6,410.5 1207.6,420.5 1217.6,430.5 1207.6,440.5 1217.6,450.5 1207.6,460.5 1217.6,470.5 1207.6,480.5 1217.6,490.5 1207.6,500.5 1217.6,510.5 1207.6,520.5 1217.6,530.5 1207.6,540.5 1217.6,550.5 1207.6,560.5 1217.6,570.5 1207.6,580.5 1217.6,590.5 1207.6,600.5 1217.6,610.5 1207.6,620.5 1217.6,630.5 1207.6,640.5 1217.6,650.5 1207.6,660.5 1217.6,670.5 1207.6,680.5 1217.6,690.5 1207.6,700.5 1217.6,710.5 1207.6,720.5 1217.6,730.5 1207.6,740.5 1217.6,750.5 1207.6,760.5 1217.6,770.5 1207.6,780.5 1217.6,790.5 1207.6,800.5 1217.6,810.5 1207.6,820.5 1217.6,830.5 1207.6,840.5 1217.6,850.5 1207.6,860.5 1217.6,870.5 1207.6,880.5 1217.6,890.5 1207.6,900.5 1217.6,910.5 1207.6,920.5 1217.6,930.5 1207.6,940.5 1217.6,950.5 1207.6,960.5 1217.6,970.5 1207.6,980.5 1217.6,990.5 1207.6,1000.5 1217.6,1010.5 1207.6,1020.5 1217.6,1030.5 1207.6,1040.5 1217.6,1050.5 1207.6,1060.5 1217.6,1070.5" fill="none" stroke="#A4A4A4" stroke-width="2"/><path d="M1197.6 0.5 H1207.6 M1197.6 1040.5 H1207.6" stroke="#A4A4A4" stroke-width="2"/>
<polygon points="1470.8,-19.5 1480.8,-9.5 1470.8,0.5 1480.8,10.5 1470.8,20.5 1480.8,30.5 1470.8,40.5 1480.8,50.5 1470.8,60.5 1480.8,70.5 1470.8,80.5 1480.8,90.5 1470.8,100.5 1480.8,110.5 1470.8,120.5 1480.8,130.5 1470.8,140.5 1480.8,150.5 1470.8,160.5 1480.8,170.5 1470.8,180.5 1480.8,190.5 1470.8,200.5 1480.8,210.5 1470.8,220.5 1480.8,230.5 1470.8,240.5 1480.8,250.5 1470.8,260.5 1480.8,270.5 1470.8,280.5 1480.8,290.5 1470.8,300.5 1480.8,310.5 1470.8,320.5 1480.8,330.5 1470.8,340.5 1480.8,350.5 1470.8,360.5 1480.8,370.5 1470.8,380.5 1480.8,390.5 1470.8,400.5 1480.8,410.5 1470.8,420.5 1480.8,430.5 1470.8,440.5 1480.8,450.5 1470.8,460.5 1480.8,470.5 1470.8,480.5 1480.8,490.5 1470.8,500.5 1480.8,510.5 1470.8,520.5 1480.8,530.5 1470.8,540.5 1480.8,550.5 1470.8,560.5 1480.8,570.5 1470.8,580.5 1480.8,590.5 1470.8,600.5 1480.8,610.5 1470.8,620.5 1480.8,630.5 1470.8,640.5 1480.8,650.5 1470.8,660.5 1480.8,670.5 1470.8,680.5 1480.8,690.5 1470.8,700.5 1480.8,710.5 1470.8,720.5 1480.8,730.5 1470.8,740.5 1480.8,750.5 1470.8,760.5 1480.8,770.5 1470.8,780.5 1480.8,790.5 1470.8,800.5 1480.8,810.5 1470.8,820.5 1480.8,830.5 1470.8,840.5 1480.8,850.5 1470.8,860.5 1480.8,870.5 1470.8,880.5 1480.8,890.5 1470.8,900.5 1480.8,910.5 1470.8,920.5 1480.8,930.5 1470.8,940.5 1480.8,950.5 1470.8,960.5 1480.8,970.5 1470.8,980.5 1480.8,990.5 1470.8,1000.5 1480.8,1010.5 1470.8,1020.5 1480.8,1030.5 1470.8,1040.5 1480.8,1050.5 1470.8,1060.5 1480.8,1070.5 1490.8,1070.5 1480.8,1060.5 1490.8,1050.5 1480.8,1040.5 1490.8,1030.5 1480.8,1020.5 1490.8,1010.5 1480.8,1000.5 1490.8,990.5 1480.8,980.5 1490.8,970.5 1480.8,960.5 1490.8,950.5 1480.8,940.5 1490.8,930.5 1480.8,920.5 1490.8,910.5 1480.8,900.5 1490.8,890.5 1480.8,880.5 1490.8,870.5 1480.8,860.5 1490.8,850.5 1480.8,840.5 1490.8,830.5 1480.8,820.5 1490.8,810.5 1480.8,800.5 1490.8,790.5 1480.8,780.5 1490.8,770.5 1480.8,760.5 1490.8,750.5 1480.8,740.5 1490.8,730.5 1480.8,720.5 1490.8,710.5 1480.8,700.5 1490.8,690.5 1480.8,680.5 1490.8,670.5 1480.8,660.5 1490.8,650.5 1480.8,640.5 1490.8,630.5 1480.8,620.5 1490.8,610.5 1480.8,600.5 1490.8,590.5 1480.8,580.5 1490.8,570.5 1480.8,560.5 1490.8,550.5 1480.8,540.5 1490.8,530.5 1480.8,520.5 1490.8,510.5 1480.8,500.5 1490.8,490.5 1480.8,480.5 1490.8,470.5 1480.8,460.5 1490.8,450.5 1480.8,440.5 1490.8,430.5 1480.8,420.5 1490.8,410.5 1480.8,400.5 1490.8,390.5 1480.8,380.5 1490.8,370.5 1480.8,360.5 1490.8,350.5 1480.8,340.5 1490.8,330.5 1480.8,320.5 1490.8,310.5 1480.8,300.5 1490.8,290.5 1480.8,280.5 1490.8,270.5 1480.8,260.5 1490.8,250.5 1480.8,240.5 1490.8,230.5 1480.8,220.5 1490.8,210.5 1480.8,200.5 1490.8,190.5 1480.8,180.5 1490.8,170.5 1480.8,160.5 1490.8,150.5 1480.8,140.5 1490.8,130.5 1480.8,120.5 1490.8,110.5 1480.8,100.5 1490.8,90.5 1480.8,80.5 1490.8,70.5 1480.8,60.5 1490.8,50.5 1480.8,40.5 1490.8,30.5 1480.8,20.5 1490.8,10.5 1480.8,0.5 1490.8,-9.5 1480.8,-19.5" fill="#fff"/><polyline points="1470.8,-19.5 1480.8,-9.5 1470.8,0.5 1480.8,10.5 1470.8,20.5 1480.8,30.5 1470.8,40.5 1480.8,50.5 1470.8,60.5 1480.8,70.5 1470.8,80.5 1480.8,90.5 1470.8,100.5 1480.8,110.5 1470.8,120.5 1480.8,130.5 1470.8,140.5 1480.8,150.5 1470.8,160.5 1480.8,170.5 1470.8,180.5 1480.8,190.5 1470.8,200.5 1480.8,210.5 1470.8,220.5 1480.8,230.5 1470.8,240.5 1480.8,250.5 1470.8,260.5 1480.8,270.5 1470.8,280.5 1480.8,290.5 1470.8,300.5 1480.8,310.5 1470.8,320.5 1480.8,330.5 1470.8,340.5 1480.8,350.5 1470.8,360.5 1480.8,370.5 1470.8,380.5 1480.8,390.5 1470.8,400.5 1480.8,410.5 1470.8,420.5 1480.8,430.5 1470.8,440.5 1480.8,450.5 1470.8,460.5 1480.8,470.5 1470.8,480.5 1480.8,490.5 1470.8,500.5 1480.8,510.5 1470.8,520.5 1480.8,530.5 1470.8,540.5 1480.8,550.5 1470.8,560.5 1480.8,570.5 1470.8,580.5 1480.8,590.5 1470.8,600.5 1480.8,610.5 1470.8,620.5 1480.8,630.5 1470.8,640.5 1480.8,650.5 1470.8,660.5 1480.8,670.5 1470.8,680.5 1480.8,690.5 1470.8,700.5 1480.8,710.5 1470.8,720.5 1480.8,730.5 1470.8,740.5 1480.8,750.5 1470.8,760.5 1480.8,770.5 1470.8,780.5 1480.8,790.5 1470.8,800.5 1480.8,810.5 1470.8,820.5 1480.8,830.5 1470.8,840.5 1480.8,850.5 1470.8,860.5 1480.8,870.5 1470.8,880.5 1480.8,890.5 1470.8,900.5 1480.8,910.5 1470.8,920.5 1480.8,930.5 1470.8,940.5 1480.8,950.5 1470.8,960.5 1480.8,970.5 1470.8,980.5 1480.8,990.5 1470.8,1000.5 1480.8,1010.5 1470.8,1020.5 1480.8,1030.5 1470.8,1040.5 1480.8,1050.5 1470.8,1060.5 1480.8,1070.5" fill="none" stroke="#A4A4A4" stroke-width="2"/><polyline points="1480.8,-19.5 1490.8,-9.5 1480.8,0.5 1490.8,10.5 1480.8,20.5 1490.8,30.5 1480.8,40.5 1490.8,50.5 1480.8,60.5 1490.8,70.5 1480.8,80.5 1490.8,90.5 1480.8,100.5 1490.8,110.5 1480.8,120.5 1490.8,130.5 1480.8,140.5 1490.8,150.5 1480.8,160.5 1490.8,170.5 1480.8,180.5 1490.8,190.5 1480.8,200.5 1490.8,210.5 1480.8,220.5 1490.8,230.5 1480.8,240.5 1490.8,250.5 1480.8,260.5 1490.8,270.5 1480.8,280.5 1490.8,290.5 1480.8,300.5 1490.8,310.5 1480.8,320.5 1490.8,330.5 1480.8,340.5 1490.8,350.5 1480.8,360.5 1490.8,370.5 1480.8,380.5 1490.8,390.5 1480.8,400.5 1490.8,410.5 1480.8,420.5 1490.8,430.5 1480.8,440.5 1490.8,450.5 1480.8,460.5 1490.8,470.5 1480.8,480.5 1490.8,490.5 1480.8,500.5 1490.8,510.5 1480.8,520.5 1490.8,530.5 1480.8,540.5 1490.8,550.5 1480.8,560.5 1490.8,570.5 1480.8,580.5 1490.8,590.5 1480.8,600.5 1490.8,610.5 1480.8,620.5 1490.8,630.5 1480.8,640.5 1490.8,650.5 1480.8,660.5 1490.8,670.5 1480.8,680.5 1490.8,690.5 1480.8,700.5 1490.8,710.5 1480.8,720.5 1490.8,730.5 1480.8,740.5 1490.8,750.5 1480.8,760.5 1490.8,770.5 1480.8,780.5 1490.8,790.5 1480.8,800.5 1490.8,810.5 1480.8,820.5 1490.8,830.5 1480.8,840.5 1490.8,850.5 1480.8,860.5 1490.8,870.5 1480.8,880.5 1490.8,890.5 1480.8,900.5 1490.8,910.5 1480.8,920.5 1490.8,930.5 1480.8,940.5 1490.8,950.5 1480.8,960.5 1490.8,970.5 1480.8,980.5 1490.8,990.5 1480.8,1000.5 1490.8,1010.5 1480.8,1020.5 1490.8,1030.5 1480.8,1040.5 1490.8,1050.5 1480.8,1060.5 1490.8,1070.5" fill="none" stroke="#A4A4A4" stroke-width="2"/><path d="M1470.8 0.5 H1480.8 M1470.8 1040.5 H1480.8" stroke="#A4A4A4" stroke-width="2"/>
</svg>
</body></html>
